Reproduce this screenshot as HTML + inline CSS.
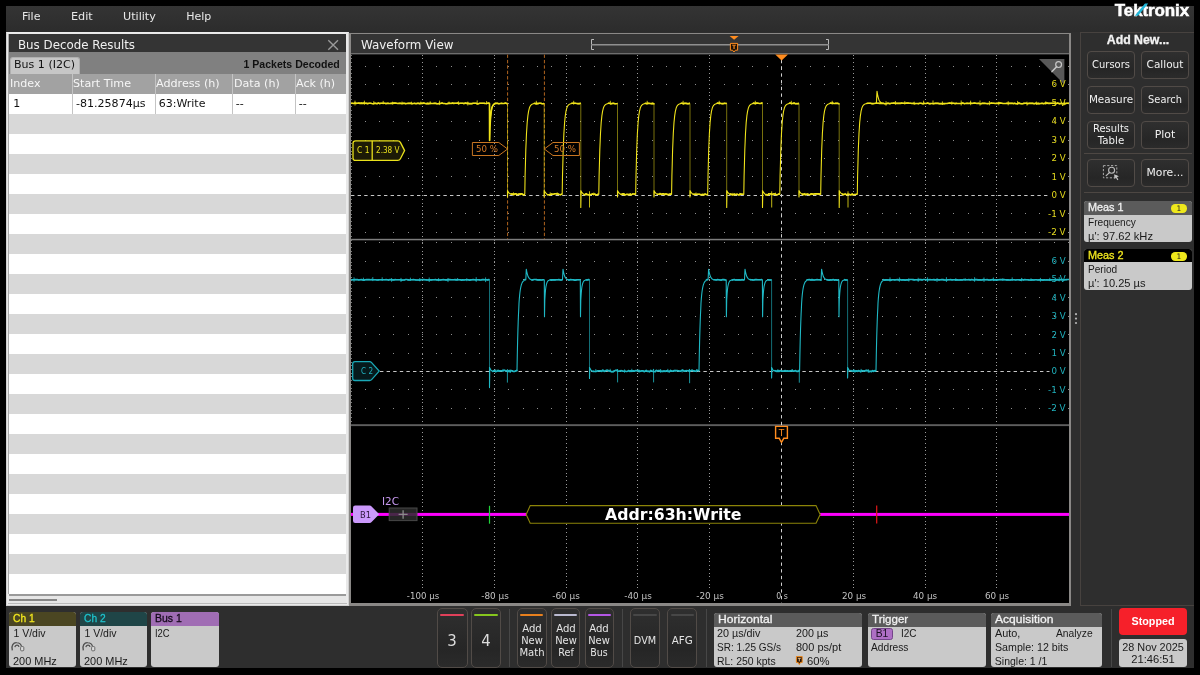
<!DOCTYPE html>
<html lang="en"><head><meta charset="utf-8"><title>Tektronix - Bus Decode Results / Waveform View</title>
<style>
html,body{margin:0;padding:0;background:#000;}
body{width:1200px;height:675px;overflow:hidden;position:relative;font-family:"DejaVu Sans","Liberation Sans",sans-serif;}
.a{position:absolute;box-sizing:border-box;}
.t{position:absolute;white-space:nowrap;height:16px;will-change:opacity;}
#frame{left:6px;top:6px;width:1188px;height:662px;background:#2e2e2e;}
#menubar{left:6px;top:6px;width:1188px;height:26px;background:linear-gradient(#343434,#2c2c2c);}
.btn{position:absolute;box-sizing:border-box;border:1px solid #514b47;border-radius:4px;background:linear-gradient(#2f2f2f,#262626 70%,#2b2b2b);}
.badge{position:absolute;box-sizing:border-box;border-radius:3px;background:#c9c9c9;overflow:hidden;}
.badge .hd{position:absolute;left:0;top:0;right:0;}
svg{position:absolute;left:0;top:0;}
</style></head><body>
<div id="frame" class="a"></div>
<div id="menubar" class="a"></div>
<div id="t0" class="t" style="left:21.50px;top:9.12px;font:400 11px/16px 'DejaVu Sans','Liberation Sans',sans-serif;color:#e8e8e8;transform:scaleX(1.0042);transform-origin:left center;">File</div>
<div id="t1" class="t" style="left:70.60px;top:9.12px;font:400 11px/16px 'DejaVu Sans','Liberation Sans',sans-serif;color:#e8e8e8;transform:scaleX(1.0182);transform-origin:left center;">Edit</div>
<div id="t2" class="t" style="left:122.50px;top:9.12px;font:400 11px/16px 'DejaVu Sans','Liberation Sans',sans-serif;color:#e8e8e8;transform:scaleX(1.0136);transform-origin:left center;">Utility</div>
<div id="t3" class="t" style="left:186.20px;top:9.12px;font:400 11px/16px 'DejaVu Sans','Liberation Sans',sans-serif;color:#e8e8e8;">Help</div>
<div class="t" id="logo" style="left:1114.8px;top:0.8px;height:20px;font:700 17px/20px 'Liberation Sans','DejaVu Sans',sans-serif;color:#fff;letter-spacing:-0.12px;-webkit-text-stroke:0.5px #fff;">Tektronix</div>
<svg width="1200" height="675" viewBox="0 0 1200 675" style="pointer-events:none"><polygon points="1134.8,15.8 1138,15.8 1148.2,3.4 1145,3.4" fill="#1fb6d9"/></svg>
<div class="a" style="left:6px;top:32px;width:343px;height:574px;background:#e9e9e9;border:1px solid #d0d0d0;border-top-color:#ececec;"></div>
<div class="a" style="left:8px;top:34px;width:338px;height:18px;background:#343434;"></div>
<div class="a" style="left:8px;top:52px;width:338px;height:22px;background:#808080;"></div>
<div class="a" style="left:9.5px;top:56.5px;width:70.5px;height:17.5px;background:#c6c6c6;border-radius:3px 3px 0 0;border:1px solid #b0b0b0;border-bottom:none"></div>
<div class="a" style="left:9px;top:74px;width:337px;height:20px;background:#a2a2a2;"></div>
<div class="a" style="left:9px;top:94px;width:337px;height:500px;background:repeating-linear-gradient(#ffffff 0,#ffffff 20px,#d8d8d8 20px,#d8d8d8 40px);"></div>
<div class="a" style="left:71.5px;top:74px;width:1px;height:40px;background:#c4c4c4;"></div>
<div class="a" style="left:154.5px;top:74px;width:1px;height:40px;background:#c4c4c4;"></div>
<div class="a" style="left:232.0px;top:74px;width:1px;height:40px;background:#c4c4c4;"></div>
<div class="a" style="left:294.5px;top:74px;width:1px;height:40px;background:#c4c4c4;"></div>
<div class="a" style="left:8px;top:34px;width:1px;height:560px;background:#aaa;"></div>
<div class="a" style="left:9px;top:594px;width:337px;height:1.5px;background:#9a9a9a;"></div>
<div class="a" style="left:9px;top:595.5px;width:337px;height:7px;background:#e6e6e6;"></div>
<div class="a" style="left:9px;top:599px;width:48px;height:2px;background:#858585;"></div>
<div class="a" style="left:8px;top:602.5px;width:339px;height:1px;background:#bbb;"></div>
<div id="t4" class="t" style="left:18.30px;top:36.64px;font:400 12px/16px 'DejaVu Sans','Liberation Sans',sans-serif;color:#f0f0f0;transform:scaleX(0.9863);transform-origin:left center;">Bus Decode Results</div>
<div id="t5" class="t" style="left:14.30px;top:56.72px;font:400 11px/16px 'DejaVu Sans','Liberation Sans',sans-serif;color:#111;transform:scaleX(1.0041);transform-origin:left center;">Bus 1 (I2C)</div>
<div id="t6" class="t" style="right:860.40px;top:55.71px;font:700 10.5px/16px 'Liberation Sans','DejaVu Sans',sans-serif;color:#111;transform:scaleX(1.0050);transform-origin:right center;">1 Packets Decoded</div>
<div id="t7" class="t" style="left:10.30px;top:76.02px;font:400 11px/16px 'DejaVu Sans','Liberation Sans',sans-serif;color:#f6f6f6;transform:scaleX(1.0067);transform-origin:left center;">Index</div>
<div id="t8" class="t" style="left:73.30px;top:76.02px;font:400 11px/16px 'DejaVu Sans','Liberation Sans',sans-serif;color:#f6f6f6;transform:scaleX(1.0123);transform-origin:left center;">Start Time</div>
<div id="t9" class="t" style="left:156.30px;top:76.02px;font:400 11px/16px 'DejaVu Sans','Liberation Sans',sans-serif;color:#f6f6f6;transform:scaleX(1.0134);transform-origin:left center;">Address (h)</div>
<div id="t10" class="t" style="left:233.70px;top:76.02px;font:400 11px/16px 'DejaVu Sans','Liberation Sans',sans-serif;color:#f6f6f6;transform:scaleX(1.0104);transform-origin:left center;">Data (h)</div>
<div id="t11" class="t" style="left:296.20px;top:76.02px;font:400 11px/16px 'DejaVu Sans','Liberation Sans',sans-serif;color:#f6f6f6;transform:scaleX(1.0074);transform-origin:left center;">Ack (h)</div>
<div id="t12" class="t" style="left:13.30px;top:95.62px;font:400 11px/16px 'DejaVu Sans','Liberation Sans',sans-serif;color:#111;">1</div>
<div id="t13" class="t" style="left:75.50px;top:95.62px;font:400 11px/16px 'DejaVu Sans','Liberation Sans',sans-serif;color:#111;transform:scaleX(1.0045);transform-origin:left center;">-81.25874µs</div>
<div id="t14" class="t" style="left:158.70px;top:95.62px;font:400 11px/16px 'DejaVu Sans','Liberation Sans',sans-serif;color:#111;">63:Write</div>
<div id="t15" class="t" style="left:235.80px;top:95.62px;font:400 11px/16px 'DejaVu Sans','Liberation Sans',sans-serif;color:#111;">--</div>
<div id="t16" class="t" style="left:298.70px;top:95.62px;font:400 11px/16px 'DejaVu Sans','Liberation Sans',sans-serif;color:#111;">--</div>
<svg width="1200" height="675" viewBox="0 0 1200 675" style="pointer-events:none"><path d="M328.3,40.3 L338,49.7 M338,40.3 L328.3,49.7" stroke="#9a9a9a" stroke-width="1.4" fill="none"/></svg>
<div class="a" style="left:349px;top:33px;width:722px;height:573px;background:#8a8886;"></div>
<div class="a" style="left:351px;top:34px;width:718px;height:19px;background:#343434;"></div>
<div class="a" style="left:351px;top:53px;width:718px;height:1px;background:#6e6e6e;"></div>
<div class="a" style="left:351px;top:54px;width:718px;height:549px;background:#000;border-top:1px solid #2a2a2a;"></div>
<div id="t17" class="t" style="left:360.80px;top:36.64px;font:400 12px/16px 'DejaVu Sans','Liberation Sans',sans-serif;color:#f0f0f0;transform:scaleX(0.9923);transform-origin:left center;">Waveform View</div>
<svg width="1200" height="675" viewBox="0 0 1200 675" style="pointer-events:none">
<defs><clipPath id="cp"><rect x="351" y="54.3" width="718" height="548.6"/></clipPath></defs>
<g clip-path="url(#cp)">
<path d="M422.5,54.5V603M494.3,54.5V603M566.1,54.5V603M637.9,54.5V603M709.7,54.5V603M853.3,54.5V603M925.1,54.5V603M996.9,54.5V603" stroke="#9a9a9a" stroke-width="1" stroke-dasharray="1 2.7" fill="none" shape-rendering="crispEdges"/>
<path d="M351.5,54.5V425" stroke="#7a7a7a" stroke-width="1" stroke-dasharray="1 2.7" fill="none" shape-rendering="crispEdges"/>
<path d="M364.56,66.2H1069M364.56,84.6H1069M364.56,103.1H1069M364.56,121.5H1069M364.56,140.0H1069M364.56,158.4H1069M364.56,176.9H1069M364.56,213.8H1069M364.56,232.2H1069M364.56,242.7H1069M364.56,261.1H1069M364.56,279.5H1069M364.56,297.9H1069M364.56,316.3H1069M364.56,334.7H1069M364.56,353.1H1069M364.56,389.9H1069M364.56,408.3H1069" stroke="#8e8e8e" stroke-width="1" stroke-dasharray="1 13.36" fill="none" shape-rendering="crispEdges"/>
<rect x="351" y="238.8" width="718" height="1.5" fill="#7d7d7d"/>
<rect x="351" y="424.2" width="718" height="1.9" fill="#5e5e5e"/>
<path d="M351,195.5H1049.5M380,371.5H1049.5" stroke="#c6c6c6" stroke-width="1" stroke-dasharray="3.4 3.2" fill="none"/>
<path d="M781.5,60V603" stroke="#d0d0d0" stroke-width="1" stroke-dasharray="3.3 3.4" fill="none"/>
<path d="M507.6,54.5V238.8M544.4,54.5V238.8" stroke="#b0641e" stroke-width="1" stroke-dasharray="3.4 2" fill="none"/>
<path d="M351.0,103.3L352.3,103.2L353.6,103.5L354.9,103.1L356.2,103.4L357.5,103.3L358.8,103.1L360.1,103.4L361.4,103.1L362.7,103.4L364.0,103.1L365.3,103.2L366.6,103.4L367.9,103.6L369.2,103.2L370.5,103.2L371.8,103.5L373.1,103.7L374.4,103.4L375.7,103.3L377.0,103.7L378.3,103.1L379.6,103.6L380.9,103.3L382.2,103.2L383.5,103.2L384.8,103.3L386.1,103.6L387.4,103.2L388.7,103.4L390.0,103.5L391.3,103.3L392.6,103.4L393.9,103.1L395.2,103.1L396.5,103.2L397.8,103.5L399.1,103.4L400.4,103.3L401.7,103.5L403.0,103.4L404.3,103.3L405.6,103.6L406.9,103.5L408.2,103.2L409.5,103.4L410.8,103.4L412.1,103.6L413.4,103.5L414.7,103.3L416.0,103.7L417.3,103.2L418.6,103.4L419.9,103.6L421.2,103.2L422.5,103.4L423.8,103.1L425.1,103.5L426.4,103.6L427.7,103.4L429.0,103.6L430.3,103.3L431.6,103.5L432.9,103.5L434.2,103.4L435.5,103.4L436.8,103.6L438.1,103.7L439.4,103.4L440.7,103.5L442.0,103.1L443.3,103.5L444.6,103.5L445.9,103.7L447.2,103.6L448.5,103.3L449.8,103.3L451.1,103.5L452.4,103.1L453.7,103.4L455.0,103.2L456.3,103.2L457.6,103.1L458.9,103.6L460.2,103.2L461.5,103.2L462.8,103.3L464.1,103.6L465.4,103.1L466.7,103.4L468.0,103.4L469.3,103.6L470.6,103.6L471.9,103.6L473.2,103.3L474.5,103.3L475.8,103.3L477.1,103.6L478.4,103.7L479.7,103.2L481.0,103.2L482.3,103.2L483.6,103.2L484.9,103.4L486.2,103.5L487.5,103.3L488.8,103.1L489.5,103.4L489.5,103.4L489.6,140.5L489.9,128.0L489.9,128.0L490.3,121.7L490.6,117.0L491.0,113.5L491.3,110.9L491.7,109.0L492.0,107.5L492.4,106.5L492.8,105.7L493.1,105.1L493.5,104.7L493.8,104.3L494.2,104.1L494.5,103.9L494.9,103.8L495.0,103.4L496.3,103.3L497.6,103.4L498.9,103.7L500.2,103.5L501.5,103.4L502.8,103.5L504.1,103.5L505.4,103.1L506.7,103.6L507.5,103.4L507.5,103.4M507.5,190.3L507.5,197.0L507.8,191.1L508.7,192.7L510.0,193.9L510.5,193.8L511.6,194.1L512.7,194.0L513.8,194.7L514.9,193.9L516.0,193.7L517.1,194.8L518.2,194.3L519.3,193.9L520.4,194.4L521.5,193.7L522.6,194.3L523.7,194.9L524.8,194.3L524.8,194.3L525.1,176.1L525.5,161.6L525.8,149.9L526.2,140.6L526.5,133.2L526.9,127.2L527.2,122.4L527.6,118.6L527.9,115.6L528.3,113.1L528.6,111.2L529.0,109.6L529.3,108.4L529.6,107.4L530.0,106.6L530.3,106.0L530.7,105.4L531.0,105.0L531.4,104.7L531.7,104.4L532.1,104.2L532.4,104.1L532.8,103.9L533.1,103.8L533.5,103.7L533.8,103.7L534.0,103.2L535.3,103.6L536.6,103.4L537.9,103.6L539.2,103.3L540.5,103.2L541.8,103.6L543.1,103.7L544.2,103.4L544.2,103.4M544.2,190.3L544.2,197.0L544.5,191.1L545.4,192.7L546.7,193.9L547.2,194.7L548.3,194.7L549.4,194.7L550.5,194.6L551.6,194.0L552.7,194.3L553.8,194.1L554.9,193.7L556.0,193.7L557.1,194.0L558.2,194.0L559.3,194.5L560.4,194.8L561.5,194.2L562.2,194.3L562.2,194.3L562.5,176.1L562.9,161.6L563.2,149.9L563.6,140.6L563.9,133.2L564.3,127.2L564.6,122.4L565.0,118.6L565.3,115.6L565.7,113.1L566.0,111.2L566.4,109.6L566.7,108.4L567.0,107.4L567.4,106.6L567.7,106.0L568.1,105.4L568.4,105.0L568.8,104.7L569.1,104.4L569.5,104.2L569.8,104.1L570.2,103.9L570.5,103.8L570.9,103.7L571.2,103.7L571.4,103.2L572.7,103.2L574.0,103.2L575.3,103.2L576.6,103.5L577.9,103.6L579.2,103.6L580.5,103.4L580.8,103.4L580.8,103.4M580.8,190.3L580.8,207.5L581.1,191.1L582.0,192.7L583.3,193.9L583.8,194.5L584.9,194.7L586.0,193.8L587.1,194.5L588.2,194.8L589.3,194.6L590.4,194.6L591.5,194.3L592.6,193.9L593.7,194.6L594.8,194.1L595.9,194.7L597.0,194.9L598.1,194.2L598.8,194.3L598.8,194.3L599.1,176.1L599.5,161.6L599.8,149.9L600.2,140.6L600.5,133.2L600.9,127.2L601.2,122.4L601.6,118.6L601.9,115.6L602.3,113.1L602.6,111.2L603.0,109.6L603.3,108.4L603.6,107.4L604.0,106.6L604.3,106.0L604.7,105.4L605.0,105.0L605.4,104.7L605.7,104.4L606.1,104.2L606.4,104.1L606.8,103.9L607.1,103.8L607.5,103.7L607.8,103.7L608.0,103.2L609.3,103.2L610.6,103.6L611.9,103.6L613.2,103.2L614.5,103.6L615.8,103.7L617.1,103.5L617.5,103.4L617.5,103.4M617.5,190.3L617.5,197.0L617.8,191.1L618.7,192.7L620.0,193.9L620.5,194.1L621.6,194.4L622.7,193.9L623.8,193.7L624.9,194.9L626.0,194.5L627.1,194.3L628.2,194.8L629.3,194.2L630.4,194.7L631.5,194.7L632.6,194.0L633.7,194.0L634.8,194.1L635.7,194.3L635.7,194.3L636.0,176.1L636.4,161.6L636.7,149.9L637.1,140.6L637.4,133.2L637.8,127.2L638.1,122.4L638.5,118.6L638.8,115.6L639.2,113.1L639.5,111.2L639.9,109.6L640.2,108.4L640.5,107.4L640.9,106.6L641.2,106.0L641.6,105.4L641.9,105.0L642.3,104.7L642.6,104.4L643.0,104.2L643.3,104.1L643.7,103.9L644.0,103.8L644.4,103.7L644.7,103.7L644.9,103.2L646.2,103.6L647.5,103.3L648.8,103.4L650.1,103.5L651.4,103.6L652.7,103.4L654.0,103.7L654.0,103.4L654.0,103.4M654.0,190.3L654.0,197.0L654.3,191.1L655.2,192.7L656.5,193.9L657.0,194.3L658.1,194.3L659.2,194.3L660.3,193.7L661.4,194.2L662.5,193.9L663.6,193.7L664.7,194.7L665.8,193.9L666.9,194.3L668.0,194.6L669.1,194.4L670.2,194.1L671.3,194.3L671.6,194.3L671.6,194.3L671.9,176.1L672.3,161.6L672.6,149.9L673.0,140.6L673.3,133.2L673.7,127.2L674.0,122.4L674.4,118.6L674.7,115.6L675.1,113.1L675.4,111.2L675.8,109.6L676.1,108.4L676.4,107.4L676.8,106.6L677.1,106.0L677.5,105.4L677.8,105.0L678.2,104.7L678.5,104.4L678.9,104.2L679.2,104.1L679.6,103.9L679.9,103.8L680.3,103.7L680.6,103.7L680.8,103.2L682.1,103.3L683.4,103.6L684.7,103.4L686.0,103.4L687.3,103.6L688.6,103.6L689.9,103.4L690.0,103.4L690.0,103.4M690.0,190.3L690.0,197.0L690.3,191.1L691.2,192.7L692.5,193.9L693.0,194.4L694.1,194.3L695.2,194.3L696.3,194.5L697.4,194.2L698.5,194.3L699.6,194.3L700.7,194.8L701.8,194.5L702.9,194.8L704.0,194.8L705.1,194.0L706.2,194.4L707.3,194.8L707.7,194.3L707.7,194.3L708.0,176.1L708.4,161.6L708.7,149.9L709.1,140.6L709.4,133.2L709.8,127.2L710.1,122.4L710.5,118.6L710.8,115.6L711.2,113.1L711.5,111.2L711.9,109.6L712.2,108.4L712.5,107.4L712.9,106.6L713.2,106.0L713.6,105.4L713.9,105.0L714.3,104.7L714.6,104.4L715.0,104.2L715.3,104.1L715.7,103.9L716.0,103.8L716.4,103.7L716.7,103.7L716.9,103.1L718.2,103.2L719.5,103.1L720.8,103.5L722.1,103.6L723.4,103.6L724.7,103.2L726.0,103.5L726.7,103.4L726.7,103.4M726.7,190.3L726.7,207.5L727.0,191.1L727.9,192.7L729.2,193.9L729.7,194.5L730.8,193.9L731.9,194.8L733.0,194.9L734.1,194.0L735.2,194.8L736.3,194.2L737.4,194.3L738.5,194.9L739.6,194.7L740.7,193.9L741.8,194.2L742.9,194.3L743.8,194.3L743.8,194.3L744.1,176.1L744.5,161.6L744.8,149.9L745.2,140.6L745.5,133.2L745.9,127.2L746.2,122.4L746.6,118.6L746.9,115.6L747.3,113.1L747.6,111.2L748.0,109.6L748.3,108.4L748.6,107.4L749.0,106.6L749.3,106.0L749.7,105.4L750.0,105.0L750.4,104.7L750.7,104.4L751.1,104.2L751.4,104.1L751.8,103.9L752.1,103.8L752.5,103.7L752.8,103.7L753.0,103.1L754.3,103.4L755.6,103.4L756.9,103.1L758.2,103.3L759.5,103.5L760.8,103.4L762.1,103.1L762.5,103.4L762.5,103.4M762.5,190.3L762.5,207.5L762.8,191.1L763.7,192.7L765.0,193.9L765.5,194.9L766.6,194.6L767.7,194.9L768.8,193.8L769.9,194.0L771.0,193.7L772.1,194.6L773.2,194.0L774.3,193.9L775.4,194.2L776.5,194.8L777.6,194.7L778.7,194.0L779.8,194.3L779.8,194.3L780.1,176.1L780.5,161.6L780.8,149.9L781.2,140.6L781.5,133.2L781.9,127.2L782.2,122.4L782.6,118.6L782.9,115.6L783.3,113.1L783.6,111.2L784.0,109.6L784.3,108.4L784.6,107.4L785.0,106.6L785.3,106.0L785.7,105.4L786.0,105.0L786.4,104.7L786.7,104.4L787.1,104.2L787.4,104.1L787.8,103.9L788.1,103.8L788.5,103.7L788.8,103.7L789.0,103.2L790.3,103.1L791.6,103.5L792.9,103.4L794.2,103.1L795.5,103.7L796.8,103.5L798.1,103.6L799.0,103.4L799.0,103.4M799.0,190.3L799.0,197.0L799.3,191.1L800.2,192.7L801.5,193.9L802.0,193.8L803.1,194.7L804.2,193.8L805.3,194.7L806.4,194.2L807.5,194.1L808.6,194.4L809.7,194.8L810.8,194.0L811.9,193.9L813.0,194.3L814.1,194.0L815.2,193.8L816.3,193.9L817.4,193.8L818.5,193.9L819.6,194.1L820.7,194.3L820.7,194.3L821.0,176.1L821.4,161.6L821.7,149.9L822.1,140.6L822.4,133.2L822.8,127.2L823.1,122.4L823.5,118.6L823.8,115.6L824.2,113.1L824.5,111.2L824.9,109.6L825.2,108.4L825.5,107.4L825.9,106.6L826.2,106.0L826.6,105.4L826.9,105.0L827.3,104.7L827.6,104.4L828.0,104.2L828.3,104.1L828.7,103.9L829.0,103.8L829.4,103.7L829.7,103.7L829.9,103.1L831.2,103.3L832.5,103.1L833.8,103.5L835.1,103.4L836.4,103.2L837.7,103.4L839.0,103.7L839.2,103.4L839.2,103.4M839.2,190.3L839.2,207.5L839.5,191.1L840.4,192.7L841.7,193.9L842.2,193.8L843.3,194.7L844.4,194.2L845.5,194.3L846.6,194.7L847.7,194.2L848.8,194.3L849.9,194.5L851.0,194.9L852.1,194.1L853.2,194.7L854.3,194.5L855.4,194.5L856.5,194.2L857.3,194.3L857.3,194.3L857.6,176.1L858.0,161.6L858.3,149.9L858.7,140.6L859.0,133.2L859.4,127.2L859.7,122.4L860.1,118.6L860.4,115.6L860.8,113.1L861.1,111.2L861.5,109.6L861.8,108.4L862.1,107.4L862.5,106.6L862.8,106.0L863.2,105.4L863.5,105.0L863.9,104.7L864.2,104.4L864.6,104.2L864.9,104.1L865.3,103.9L865.6,103.8L866.0,103.7L866.3,103.7L866.5,103.5L867.8,103.3L869.1,103.2L870.4,103.2L871.7,103.6L873.0,103.6L874.3,103.5L875.6,103.3L876.9,103.2L878.2,103.3L879.5,103.4L880.8,103.2L882.1,103.4L883.4,103.3L884.7,103.7L886.0,103.7L887.3,103.4L888.6,103.2L889.9,103.7L891.2,103.3L892.5,103.3L893.8,103.1L895.1,103.3L896.4,103.4L897.7,103.4L899.0,103.2L900.3,103.4L901.6,103.1L902.9,103.3L904.2,103.2L905.5,103.3L906.8,103.1L908.1,103.1L909.4,103.3L910.7,103.2L912.0,103.5L913.3,103.4L914.6,103.6L915.9,103.5L917.2,103.5L918.5,103.6L919.8,103.3L921.1,103.3L922.4,103.7L923.7,103.2L925.0,103.5L926.3,103.5L927.6,103.1L928.9,103.6L930.2,103.6L931.5,103.5L932.8,103.5L934.1,103.6L935.4,103.2L936.7,103.4L938.0,103.4L939.3,103.6L940.6,103.6L941.9,103.6L943.2,103.5L944.5,103.6L945.8,103.5L947.1,103.5L948.4,103.2L949.7,103.1L951.0,103.2L952.3,103.3L953.6,103.2L954.9,103.6L956.2,103.4L957.5,103.5L958.8,103.5L960.1,103.5L961.4,103.4L962.7,103.1L964.0,103.6L965.3,103.5L966.6,103.4L967.9,103.4L969.2,103.5L970.5,103.1L971.8,103.5L973.1,103.3L974.4,103.1L975.7,103.3L977.0,103.5L978.3,103.2L979.6,103.5L980.9,103.7L982.2,103.4L983.5,103.3L984.8,103.4L986.1,103.5L987.4,103.6L988.7,103.5L990.0,103.5L991.3,103.1L992.6,103.2L993.9,103.3L995.2,103.5L996.5,103.3L997.8,103.4L999.1,103.1L1000.4,103.1L1001.7,103.3L1003.0,103.5L1004.3,103.5L1005.6,103.5L1006.9,103.3L1008.2,103.4L1009.5,103.4L1010.8,103.4L1012.1,103.2L1013.4,103.6L1014.7,103.2L1016.0,103.7L1017.3,103.7L1018.6,103.1L1019.9,103.4L1021.2,103.6L1022.5,103.7L1023.8,103.4L1025.1,103.3L1026.4,103.2L1027.7,103.7L1029.0,103.2L1030.3,103.4L1031.6,103.2L1032.9,103.4L1034.2,103.7L1035.5,103.2L1036.8,103.6L1038.1,103.4L1039.4,103.6L1040.7,103.5L1042.0,103.2L1043.3,103.6L1044.6,103.4L1045.9,103.1L1047.2,103.1L1048.5,103.4L1049.8,103.4L1051.1,103.3L1052.4,103.2L1053.7,103.3L1055.0,103.3L1056.3,103.6L1057.6,103.1L1058.9,103.6L1060.2,103.6L1061.5,103.2L1062.8,103.7L1064.1,103.5L1065.4,103.6L1066.7,103.3L1068.0,103.3L1069.0,103.4" stroke="#efe21a" stroke-width="1.1" fill="none" stroke-linejoin="round"/>
<path d="M351.0,103.3L352.3,103.2L353.6,103.5L354.9,103.1L356.2,103.4L357.5,103.3L358.8,103.1L360.1,103.4L361.4,103.1L362.7,103.4L364.0,103.1L365.3,103.2L366.6,103.4L367.9,103.6L369.2,103.2L370.5,103.2L371.8,103.5L373.1,103.7L374.4,103.4L375.7,103.3L377.0,103.7L378.3,103.1L379.6,103.6L380.9,103.3L382.2,103.2L383.5,103.2L384.8,103.3L386.1,103.6L387.4,103.2L388.7,103.4L390.0,103.5L391.3,103.3L392.6,103.4L393.9,103.1L395.2,103.1L396.5,103.2L397.8,103.5L399.1,103.4L400.4,103.3L401.7,103.5L403.0,103.4L404.3,103.3L405.6,103.6L406.9,103.5L408.2,103.2L409.5,103.4L410.8,103.4L412.1,103.6L413.4,103.5L414.7,103.3L416.0,103.7L417.3,103.2L418.6,103.4L419.9,103.6L421.2,103.2L422.5,103.4L423.8,103.1L425.1,103.5L426.4,103.6L427.7,103.4L429.0,103.6L430.3,103.3L431.6,103.5L432.9,103.5L434.2,103.4L435.5,103.4L436.8,103.6L438.1,103.7L439.4,103.4L440.7,103.5L442.0,103.1L443.3,103.5L444.6,103.5L445.9,103.7L447.2,103.6L448.5,103.3L449.8,103.3L451.1,103.5L452.4,103.1L453.7,103.4L455.0,103.2L456.3,103.2L457.6,103.1L458.9,103.6L460.2,103.2L461.5,103.2L462.8,103.3L464.1,103.6L465.4,103.1L466.7,103.4L468.0,103.4L469.3,103.6L470.6,103.6L471.9,103.6L473.2,103.3L474.5,103.3L475.8,103.3L477.1,103.6L478.4,103.7L479.7,103.2L481.0,103.2L482.3,103.2L483.6,103.2L484.9,103.4L486.2,103.5L487.5,103.3L488.8,103.1L489.5,103.4L489.5,103.4L489.6,140.5L489.9,128.0L489.9,128.0L490.3,121.7L490.6,117.0L491.0,113.5L491.3,110.9L491.7,109.0L492.0,107.5L492.4,106.5L492.8,105.7L493.1,105.1L493.5,104.7L493.8,104.3L494.2,104.1L494.5,103.9L494.9,103.8L495.0,103.4L496.3,103.3L497.6,103.4L498.9,103.7L500.2,103.5L501.5,103.4L502.8,103.5L504.1,103.5L505.4,103.1L506.7,103.6L507.5,103.4L507.5,103.4M495.0,103.4L496.3,103.3L497.6,103.4L498.9,103.7L500.2,103.5L501.5,103.4L502.8,103.5L504.1,103.5L505.4,103.1L506.7,103.6L507.5,103.4M510.5,193.8L511.6,194.1L512.7,194.0L513.8,194.7L514.9,193.9L516.0,193.7L517.1,194.8L518.2,194.3L519.3,193.9L520.4,194.4L521.5,193.7L522.6,194.3L523.7,194.9L524.8,194.3M534.0,103.2L535.3,103.6L536.6,103.4L537.9,103.6L539.2,103.3L540.5,103.2L541.8,103.6L543.1,103.7L544.2,103.4M547.2,194.7L548.3,194.7L549.4,194.7L550.5,194.6L551.6,194.0L552.7,194.3L553.8,194.1L554.9,193.7L556.0,193.7L557.1,194.0L558.2,194.0L559.3,194.5L560.4,194.8L561.5,194.2L562.2,194.3M571.4,103.2L572.7,103.2L574.0,103.2L575.3,103.2L576.6,103.5L577.9,103.6L579.2,103.6L580.5,103.4L580.8,103.4M583.8,194.5L584.9,194.7L586.0,193.8L587.1,194.5L588.2,194.8L589.3,194.6L590.4,194.6L591.5,194.3L592.6,193.9L593.7,194.6L594.8,194.1L595.9,194.7L597.0,194.9L598.1,194.2L598.8,194.3M608.0,103.2L609.3,103.2L610.6,103.6L611.9,103.6L613.2,103.2L614.5,103.6L615.8,103.7L617.1,103.5L617.5,103.4M620.5,194.1L621.6,194.4L622.7,193.9L623.8,193.7L624.9,194.9L626.0,194.5L627.1,194.3L628.2,194.8L629.3,194.2L630.4,194.7L631.5,194.7L632.6,194.0L633.7,194.0L634.8,194.1L635.7,194.3M644.9,103.2L646.2,103.6L647.5,103.3L648.8,103.4L650.1,103.5L651.4,103.6L652.7,103.4L654.0,103.7L654.0,103.4M657.0,194.3L658.1,194.3L659.2,194.3L660.3,193.7L661.4,194.2L662.5,193.9L663.6,193.7L664.7,194.7L665.8,193.9L666.9,194.3L668.0,194.6L669.1,194.4L670.2,194.1L671.3,194.3L671.6,194.3M680.8,103.2L682.1,103.3L683.4,103.6L684.7,103.4L686.0,103.4L687.3,103.6L688.6,103.6L689.9,103.4L690.0,103.4M693.0,194.4L694.1,194.3L695.2,194.3L696.3,194.5L697.4,194.2L698.5,194.3L699.6,194.3L700.7,194.8L701.8,194.5L702.9,194.8L704.0,194.8L705.1,194.0L706.2,194.4L707.3,194.8L707.7,194.3M716.9,103.1L718.2,103.2L719.5,103.1L720.8,103.5L722.1,103.6L723.4,103.6L724.7,103.2L726.0,103.5L726.7,103.4M729.7,194.5L730.8,193.9L731.9,194.8L733.0,194.9L734.1,194.0L735.2,194.8L736.3,194.2L737.4,194.3L738.5,194.9L739.6,194.7L740.7,193.9L741.8,194.2L742.9,194.3L743.8,194.3M753.0,103.1L754.3,103.4L755.6,103.4L756.9,103.1L758.2,103.3L759.5,103.5L760.8,103.4L762.1,103.1L762.5,103.4M765.5,194.9L766.6,194.6L767.7,194.9L768.8,193.8L769.9,194.0L771.0,193.7L772.1,194.6L773.2,194.0L774.3,193.9L775.4,194.2L776.5,194.8L777.6,194.7L778.7,194.0L779.8,194.3M789.0,103.2L790.3,103.1L791.6,103.5L792.9,103.4L794.2,103.1L795.5,103.7L796.8,103.5L798.1,103.6L799.0,103.4M802.0,193.8L803.1,194.7L804.2,193.8L805.3,194.7L806.4,194.2L807.5,194.1L808.6,194.4L809.7,194.8L810.8,194.0L811.9,193.9L813.0,194.3L814.1,194.0L815.2,193.8L816.3,193.9L817.4,193.8L818.5,193.9L819.6,194.1L820.7,194.3M829.9,103.1L831.2,103.3L832.5,103.1L833.8,103.5L835.1,103.4L836.4,103.2L837.7,103.4L839.0,103.7L839.2,103.4M842.2,193.8L843.3,194.7L844.4,194.2L845.5,194.3L846.6,194.7L847.7,194.2L848.8,194.3L849.9,194.5L851.0,194.9L852.1,194.1L853.2,194.7L854.3,194.5L855.4,194.5L856.5,194.2L857.3,194.3M866.5,103.5L867.8,103.3L869.1,103.2L870.4,103.2L871.7,103.6L873.0,103.6L874.3,103.5L875.6,103.3L876.9,103.2L878.2,103.3L879.5,103.4L880.8,103.2L882.1,103.4L883.4,103.3L884.7,103.7L886.0,103.7L887.3,103.4L888.6,103.2L889.9,103.7L891.2,103.3L892.5,103.3L893.8,103.1L895.1,103.3L896.4,103.4L897.7,103.4L899.0,103.2L900.3,103.4L901.6,103.1L902.9,103.3L904.2,103.2L905.5,103.3L906.8,103.1L908.1,103.1L909.4,103.3L910.7,103.2L912.0,103.5L913.3,103.4L914.6,103.6L915.9,103.5L917.2,103.5L918.5,103.6L919.8,103.3L921.1,103.3L922.4,103.7L923.7,103.2L925.0,103.5L926.3,103.5L927.6,103.1L928.9,103.6L930.2,103.6L931.5,103.5L932.8,103.5L934.1,103.6L935.4,103.2L936.7,103.4L938.0,103.4L939.3,103.6L940.6,103.6L941.9,103.6L943.2,103.5L944.5,103.6L945.8,103.5L947.1,103.5L948.4,103.2L949.7,103.1L951.0,103.2L952.3,103.3L953.6,103.2L954.9,103.6L956.2,103.4L957.5,103.5L958.8,103.5L960.1,103.5L961.4,103.4L962.7,103.1L964.0,103.6L965.3,103.5L966.6,103.4L967.9,103.4L969.2,103.5L970.5,103.1L971.8,103.5L973.1,103.3L974.4,103.1L975.7,103.3L977.0,103.5L978.3,103.2L979.6,103.5L980.9,103.7L982.2,103.4L983.5,103.3L984.8,103.4L986.1,103.5L987.4,103.6L988.7,103.5L990.0,103.5L991.3,103.1L992.6,103.2L993.9,103.3L995.2,103.5L996.5,103.3L997.8,103.4L999.1,103.1L1000.4,103.1L1001.7,103.3L1003.0,103.5L1004.3,103.5L1005.6,103.5L1006.9,103.3L1008.2,103.4L1009.5,103.4L1010.8,103.4L1012.1,103.2L1013.4,103.6L1014.7,103.2L1016.0,103.7L1017.3,103.7L1018.6,103.1L1019.9,103.4L1021.2,103.6L1022.5,103.7L1023.8,103.4L1025.1,103.3L1026.4,103.2L1027.7,103.7L1029.0,103.2L1030.3,103.4L1031.6,103.2L1032.9,103.4L1034.2,103.7L1035.5,103.2L1036.8,103.6L1038.1,103.4L1039.4,103.6L1040.7,103.5L1042.0,103.2L1043.3,103.6L1044.6,103.4L1045.9,103.1L1047.2,103.1L1048.5,103.4L1049.8,103.4L1051.1,103.3L1052.4,103.2L1053.7,103.3L1055.0,103.3L1056.3,103.6L1057.6,103.1L1058.9,103.6L1060.2,103.6L1061.5,103.2L1062.8,103.7L1064.1,103.5L1065.4,103.6L1066.7,103.3L1068.0,103.3L1069.0,103.4" stroke="#efe21a" stroke-width="1.6" fill="none" stroke-linejoin="round"/>
<path d="M507.5,103.4L507.5,195.3M544.2,103.4L544.2,195.3M580.8,103.4L580.8,195.3M617.5,103.4L617.5,195.3M654.0,103.4L654.0,195.3M690.0,103.4L690.0,195.3M726.7,103.4L726.7,195.3M762.5,103.4L762.5,195.3M799.0,103.4L799.0,195.3M839.2,103.4L839.2,195.3" stroke="#efe21a" stroke-width="1" fill="none" opacity="0.5"/>
<path d="M876.4,103.4L877,91.2 L877.8,96 L879,100.2 L880.6,102.4 L882.5,103.4" stroke="#efe21a" stroke-width="1.1" fill="none" stroke-linejoin="round"/>
<path d="M355.0,100.7V105.5M364.4,100.7V104.8M373.8,101.2V104.4M383.2,100.9V104.3M392.6,101.7V104.5M402.0,101.6V104.7M411.4,101.7V104.2M420.8,101.6V104.4M430.2,101.3V104.3M439.6,100.6V105.1M449.0,101.6V104.6M458.4,101.3V104.8M467.8,101.6V105.5M477.2,100.4V104.9M486.6,101.1V104.4M513.5,192.4V195.4M520.5,193.0V195.1M536.3,100.8V104.7M550.2,192.4V195.6M557.2,192.4V195.1M573.7,100.8V104.7M586.8,192.9V195.6M593.8,192.6V194.9M610.3,100.8V104.7M623.5,193.0V195.3M630.5,193.0V195.1M647.2,100.8V104.7M660.0,192.7V195.4M667.0,193.1V195.3M683.1,100.8V104.7M696.0,192.5V194.9M703.0,193.1V195.2M719.2,100.8V104.7M732.7,192.9V194.9M739.7,192.9V195.4M755.3,100.8V104.7M768.5,193.1V195.6M775.5,192.7V195.4M791.3,100.8V104.7M805.0,192.9V195.4M812.0,193.0V195.2M819.0,193.1V195.1M832.2,100.8V104.7M845.2,192.9V194.8M852.2,193.1V194.8M886.0,101.2V105.7M895.4,101.0V104.8M904.8,101.2V104.6M914.2,101.7V104.4M923.6,100.7V104.7M933.0,100.5V104.6M942.4,101.4V105.0M951.8,101.5V104.8M961.2,100.5V105.5M970.6,100.7V105.2M980.0,100.5V105.6M989.4,101.0V105.3M998.8,101.7V105.3M1008.2,101.2V105.3M1017.6,100.9V104.7M1027.0,101.7V105.6M1036.4,101.6V104.9M1045.8,101.3V104.7M1055.2,100.8V105.7M1064.6,101.4V105.2M589.5,191.3V207.5M771.7,191.3V207.5M848.0,191.3V207.5" stroke="#efe21a" stroke-width="0.9" fill="none" opacity="0.9"/>
<path d="M351.0,279.7L352.3,279.8L353.6,279.7L354.9,279.6L356.2,279.6L357.5,279.6L358.8,280.0L360.1,279.8L361.4,279.6L362.7,280.0L364.0,280.1L365.3,279.8L366.6,279.6L367.9,279.6L369.2,279.6L370.5,279.7L371.8,279.6L373.1,279.7L374.4,279.7L375.7,279.8L377.0,280.0L378.3,279.9L379.6,279.8L380.9,279.8L382.2,279.8L383.5,279.7L384.8,279.7L386.1,279.6L387.4,279.7L388.7,280.1L390.0,279.6L391.3,279.8L392.6,279.9L393.9,280.0L395.2,279.6L396.5,279.7L397.8,279.7L399.1,279.7L400.4,279.8L401.7,280.1L403.0,280.0L404.3,280.0L405.6,279.5L406.9,279.5L408.2,279.9L409.5,280.0L410.8,279.8L412.1,279.8L413.4,279.5L414.7,279.7L416.0,280.0L417.3,280.0L418.6,280.0L419.9,280.1L421.2,279.7L422.5,279.6L423.8,279.6L425.1,279.8L426.4,279.9L427.7,280.0L429.0,279.9L430.3,279.9L431.6,279.9L432.9,279.8L434.2,279.8L435.5,279.5L436.8,280.0L438.1,279.7L439.4,280.0L440.7,279.9L442.0,279.7L443.3,279.6L444.6,279.7L445.9,279.9L447.2,279.9L448.5,279.6L449.8,279.6L451.1,279.8L452.4,279.8L453.7,279.7L455.0,279.6L456.3,279.9L457.6,279.5L458.9,279.7L460.2,279.8L461.5,280.1L462.8,279.9L464.1,280.0L465.4,279.8L466.7,279.7L468.0,279.7L469.3,280.1L470.6,279.9L471.9,279.7L473.2,279.5L474.5,279.8L475.8,279.9L477.1,279.8L478.4,279.7L479.7,279.9L481.0,280.0L482.3,279.6L483.6,279.5L484.9,279.7L486.2,279.8L487.5,279.9L488.8,279.6L489.5,279.8L489.5,279.8M489.5,367.0L489.5,387.6L489.8,368.0L490.8,369.8L492.0,371.0L492.5,371.6L493.6,370.8L494.7,370.6L495.8,371.6L496.9,371.3L498.0,370.3L499.1,371.2L500.2,370.8L501.3,370.8L502.4,370.8L503.5,370.5L504.6,370.3L505.7,370.7L506.8,370.8L507.9,371.6L509.0,370.5L510.1,371.6L511.2,370.6L512.3,370.8L513.4,371.5L514.5,371.5L515.6,370.9L516.7,370.4L517.0,371.0L517.0,371.0L517.3,354.9L517.6,341.6L517.9,330.7L518.2,321.7L518.5,314.3L518.8,308.2L519.0,303.2L519.3,299.0L519.6,295.6L519.9,292.8L520.2,290.5L520.5,288.6L520.8,287.1L521.1,285.8L521.4,284.7L521.7,283.9L522.0,283.1L522.2,282.6L522.5,282.1L522.8,281.7L523.1,281.3L523.4,281.1L523.7,280.8L524.0,280.7L524.1,279.5L525.4,279.8L525.7,279.8L525.8,279.8L526.3,269.2L527.0,273.0L528.1,276.6L529.5,278.8L531.3,279.8L531.3,280.0L532.6,279.9L533.9,279.5L535.2,279.5L536.5,279.6L537.8,280.0L539.1,279.7L540.4,279.9L541.7,280.0L543.0,279.7L543.9,279.8L544.3,279.8L544.5,316.7L544.8,300.0L544.8,300.0L545.2,293.6L545.6,289.3L546.0,286.3L546.5,284.2L546.9,282.8L547.3,281.9L547.7,281.2L548.1,280.8L548.5,280.5L549.0,280.3L549.4,280.1L549.8,280.0L549.8,279.7L551.1,280.1L552.4,279.9L553.7,279.7L555.0,279.9L556.3,279.7L557.6,279.7L558.9,279.5L560.2,279.9L561.5,280.0L562.4,279.8L562.5,279.8L563.0,269.2L563.7,273.0L564.8,276.6L566.2,278.8L568.0,279.8L568.0,279.9L569.3,280.0L570.6,279.5L571.9,279.7L573.2,279.8L574.5,280.1L575.8,280.1L577.1,279.7L578.4,279.7L579.7,279.8L579.9,279.8L580.3,279.8L580.5,316.7L580.8,300.0L580.8,300.0L581.2,293.6L581.6,289.3L582.0,286.3L582.5,284.2L582.9,282.8L583.3,281.9L583.7,281.2L584.1,280.8L584.5,280.5L585.0,280.3L585.4,280.1L585.8,280.0L585.8,279.8L587.1,280.0L588.4,279.6L589.5,279.8L589.5,279.8M589.5,367.0L589.5,378.5L589.8,368.0L590.8,369.8L592.0,371.0L592.5,371.4L593.6,371.3L594.7,371.5L595.8,371.4L596.9,371.2L598.0,370.8L599.1,370.7L600.2,370.8L601.3,371.4L602.4,370.4L603.5,370.6L604.6,371.4L605.7,370.6L606.8,370.4L607.9,370.3L609.0,371.1L610.1,370.8L611.2,371.7L612.3,371.5L613.4,371.7L614.5,370.7L615.6,370.4L616.7,370.4L617.8,371.0L618.9,371.3L620.0,370.9L621.1,370.6L622.2,370.9L623.3,371.2L624.4,371.2L625.5,371.3L626.6,371.5L627.7,371.2L628.8,370.5L629.9,371.5L631.0,370.7L632.1,371.1L633.2,370.8L634.3,371.3L635.4,370.6L636.5,370.6L637.6,370.6L638.7,370.5L639.8,371.5L640.9,371.1L642.0,370.8L643.1,370.9L644.2,371.7L645.3,371.0L646.4,370.6L647.5,371.4L648.6,371.2L649.7,371.7L650.8,370.4L651.9,371.0L653.0,371.4L654.1,371.5L655.2,371.6L656.3,370.4L657.4,370.7L658.5,370.5L659.6,370.6L660.7,371.7L661.8,371.1L662.9,371.6L664.0,370.8L665.1,371.5L666.2,370.9L667.3,370.7L668.4,371.4L669.5,371.6L670.6,370.4L671.7,371.1L672.8,371.2L673.9,370.6L675.0,370.8L676.1,370.5L677.2,370.6L678.3,370.7L679.4,371.1L680.5,371.2L681.6,370.6L682.7,370.3L683.8,370.8L684.9,371.2L686.0,370.6L687.1,370.7L688.2,370.6L689.3,371.4L690.4,371.1L691.5,370.4L692.6,370.4L693.7,370.9L694.8,371.1L695.9,371.2L697.0,370.4L698.1,370.5L699.0,371.0L699.0,371.0L699.3,354.9L699.6,341.6L699.9,330.7L700.2,321.7L700.5,314.3L700.8,308.2L701.0,303.2L701.3,299.0L701.6,295.6L701.9,292.8L702.2,290.5L702.5,288.6L702.8,287.1L703.1,285.8L703.4,284.7L703.7,283.9L704.0,283.1L704.2,282.6L704.5,282.1L704.8,281.7L705.1,281.3L705.4,281.1L705.7,280.8L706.0,280.7L706.1,279.8L707.4,279.6L708.0,279.8L708.1,279.8L708.6,269.2L709.3,273.0L710.4,276.6L711.8,278.8L713.6,279.8L713.6,279.7L714.9,279.8L716.2,280.0L717.5,279.6L718.8,279.8L720.1,280.0L721.4,280.1L722.7,279.6L724.0,279.6L725.3,280.0L725.8,279.8L726.2,279.8L726.4,316.7L726.7,300.0L726.7,300.0L727.1,293.6L727.5,289.3L727.9,286.3L728.4,284.2L728.8,282.8L729.2,281.9L729.6,281.2L730.0,280.8L730.4,280.5L730.9,280.3L731.3,280.1L731.7,280.0L731.7,280.1L733.0,279.8L734.3,279.5L735.6,280.0L736.9,279.7L738.2,280.0L739.5,279.9L740.8,280.0L742.1,279.6L743.4,280.0L744.4,279.8L744.5,279.8L745.0,269.2L745.7,273.0L746.8,276.6L748.2,278.8L750.0,279.8L750.0,279.6L751.3,279.7L752.6,280.0L753.9,280.0L755.2,279.6L756.5,279.6L757.8,279.7L759.1,279.8L760.4,279.7L761.7,279.6L762.0,279.8L762.4,279.8L762.6,316.7L762.9,300.0L762.9,300.0L763.3,293.6L763.7,289.3L764.1,286.3L764.6,284.2L765.0,282.8L765.4,281.9L765.8,281.2L766.2,280.8L766.6,280.5L767.1,280.3L767.5,280.1L767.9,280.0L767.9,279.7L769.2,279.9L770.5,280.0L771.6,279.8L771.6,279.8M771.6,367.0L771.6,378.0L771.9,368.0L772.9,369.8L774.1,371.0L774.6,370.4L775.7,371.1L776.8,371.4L777.9,370.4L779.0,371.5L780.1,370.5L781.2,371.1L782.3,371.1L783.4,371.2L784.5,370.7L785.6,370.9L786.7,371.1L787.8,370.9L788.9,371.2L790.0,370.9L791.1,370.9L792.2,370.3L793.3,371.2L794.4,371.0L795.5,370.6L796.6,371.4L797.7,371.4L798.8,370.9L799.6,371.0L799.6,371.0L799.9,354.9L800.2,341.6L800.5,330.7L800.8,321.7L801.1,314.3L801.4,308.2L801.6,303.2L801.9,299.0L802.2,295.6L802.5,292.8L802.8,290.5L803.1,288.6L803.4,287.1L803.7,285.8L804.0,284.7L804.3,283.9L804.6,283.1L804.9,282.6L805.1,282.1L805.4,281.7L805.7,281.3L806.0,281.1L806.3,280.8L806.6,280.7L806.7,279.8L808.0,279.8L809.3,279.5L810.6,279.9L811.9,279.6L813.2,279.9L814.5,280.0L815.8,279.8L817.1,279.6L818.4,279.8L819.7,279.7L821.0,280.1L821.0,279.8L821.1,279.8L821.6,269.2L822.3,273.0L823.4,276.6L824.8,278.8L826.6,279.8L826.6,279.6L827.9,280.0L829.2,280.1L830.5,279.9L831.8,280.0L833.1,279.6L834.4,280.1L835.7,279.8L837.0,280.1L838.3,280.0L838.4,279.8L838.8,279.8L839.0,316.7L839.3,300.0L839.3,300.0L839.7,293.6L840.1,289.3L840.5,286.3L841.0,284.2L841.4,282.8L841.8,281.9L842.2,281.2L842.6,280.8L843.0,280.5L843.5,280.3L843.9,280.1L844.3,280.0L844.3,279.6L845.6,280.0L846.9,280.0L847.6,279.8L847.6,279.8M847.6,367.0L847.6,378.0L847.9,368.0L848.9,369.8L850.1,371.0L850.6,370.4L851.7,370.8L852.8,371.4L853.9,370.5L855.0,371.6L856.1,370.7L857.2,371.4L858.3,370.5L859.4,371.0L860.5,371.6L861.6,370.6L862.7,370.7L863.8,371.0L864.9,370.7L866.0,370.4L867.1,370.6L868.2,370.5L869.3,371.6L870.4,371.3L871.5,371.6L872.6,370.5L873.7,371.4L874.8,370.5L875.9,371.0L876.0,371.0L876.0,371.0L876.3,354.9L876.6,341.6L876.9,330.7L877.2,321.7L877.5,314.3L877.8,308.2L878.0,303.2L878.3,299.0L878.6,295.6L878.9,292.8L879.2,290.5L879.5,288.6L879.8,287.1L880.1,285.8L880.4,284.7L880.7,283.9L881.0,283.1L881.2,282.6L881.5,282.1L881.8,281.7L882.1,281.3L882.4,281.1L882.7,280.8L883.0,280.7L883.1,279.6L884.4,280.1L885.7,279.9L887.0,279.7L888.3,280.0L889.6,279.7L890.9,280.1L892.2,279.8L893.5,279.7L894.8,279.9L896.1,279.8L897.4,279.6L898.7,279.9L900.0,279.5L901.3,280.0L902.6,279.7L903.9,279.9L905.2,280.1L906.5,279.8L907.8,279.9L909.1,279.7L910.4,279.5L911.7,279.5L913.0,279.6L914.3,279.9L915.6,279.8L916.9,279.8L918.2,280.0L919.5,279.6L920.8,279.6L922.1,279.9L923.4,279.5L924.7,279.5L926.0,279.7L927.3,279.6L928.6,279.7L929.9,279.6L931.2,279.8L932.5,279.8L933.8,279.6L935.1,279.9L936.4,279.8L937.7,279.6L939.0,280.0L940.3,279.7L941.6,279.6L942.9,279.6L944.2,279.9L945.5,280.0L946.8,280.0L948.1,279.7L949.4,279.7L950.7,279.5L952.0,279.9L953.3,279.8L954.6,279.7L955.9,279.9L957.2,279.8L958.5,280.0L959.8,279.9L961.1,279.7L962.4,280.0L963.7,279.5L965.0,279.8L966.3,279.7L967.6,279.7L968.9,279.6L970.2,280.0L971.5,279.5L972.8,279.8L974.1,280.0L975.4,279.6L976.7,279.6L978.0,279.9L979.3,279.8L980.6,279.9L981.9,280.0L983.2,279.6L984.5,279.7L985.8,279.7L987.1,279.5L988.4,280.0L989.7,280.0L991.0,279.9L992.3,279.5L993.6,280.0L994.9,279.9L996.2,279.8L997.5,279.9L998.8,279.8L1000.1,279.6L1001.4,279.6L1002.7,279.7L1004.0,279.5L1005.3,279.7L1006.6,279.9L1007.9,279.9L1009.2,280.0L1010.5,279.9L1011.8,279.7L1013.1,279.8L1014.4,279.8L1015.7,280.0L1017.0,279.8L1018.3,279.7L1019.6,279.9L1020.9,280.1L1022.2,279.6L1023.5,280.0L1024.8,279.5L1026.1,279.7L1027.4,279.7L1028.7,279.9L1030.0,280.0L1031.3,279.9L1032.6,279.7L1033.9,280.0L1035.2,279.7L1036.5,279.7L1037.8,280.0L1039.1,279.9L1040.4,279.9L1041.7,279.9L1043.0,280.1L1044.3,279.8L1045.6,280.0L1046.9,279.9L1048.2,280.0L1049.5,279.8L1050.8,279.9L1052.1,279.8L1053.4,279.7L1054.7,279.6L1056.0,279.9L1057.3,279.6L1058.6,280.0L1059.9,279.6L1061.2,279.5L1062.5,279.6L1063.8,280.0L1065.1,279.7L1066.4,279.6L1067.7,279.5L1069.0,279.5L1069.0,279.8" stroke="#1fb8c4" stroke-width="1.1" fill="none" stroke-linejoin="round"/>
<path d="M351.0,279.7L352.3,279.8L353.6,279.7L354.9,279.6L356.2,279.6L357.5,279.6L358.8,280.0L360.1,279.8L361.4,279.6L362.7,280.0L364.0,280.1L365.3,279.8L366.6,279.6L367.9,279.6L369.2,279.6L370.5,279.7L371.8,279.6L373.1,279.7L374.4,279.7L375.7,279.8L377.0,280.0L378.3,279.9L379.6,279.8L380.9,279.8L382.2,279.8L383.5,279.7L384.8,279.7L386.1,279.6L387.4,279.7L388.7,280.1L390.0,279.6L391.3,279.8L392.6,279.9L393.9,280.0L395.2,279.6L396.5,279.7L397.8,279.7L399.1,279.7L400.4,279.8L401.7,280.1L403.0,280.0L404.3,280.0L405.6,279.5L406.9,279.5L408.2,279.9L409.5,280.0L410.8,279.8L412.1,279.8L413.4,279.5L414.7,279.7L416.0,280.0L417.3,280.0L418.6,280.0L419.9,280.1L421.2,279.7L422.5,279.6L423.8,279.6L425.1,279.8L426.4,279.9L427.7,280.0L429.0,279.9L430.3,279.9L431.6,279.9L432.9,279.8L434.2,279.8L435.5,279.5L436.8,280.0L438.1,279.7L439.4,280.0L440.7,279.9L442.0,279.7L443.3,279.6L444.6,279.7L445.9,279.9L447.2,279.9L448.5,279.6L449.8,279.6L451.1,279.8L452.4,279.8L453.7,279.7L455.0,279.6L456.3,279.9L457.6,279.5L458.9,279.7L460.2,279.8L461.5,280.1L462.8,279.9L464.1,280.0L465.4,279.8L466.7,279.7L468.0,279.7L469.3,280.1L470.6,279.9L471.9,279.7L473.2,279.5L474.5,279.8L475.8,279.9L477.1,279.8L478.4,279.7L479.7,279.9L481.0,280.0L482.3,279.6L483.6,279.5L484.9,279.7L486.2,279.8L487.5,279.9L488.8,279.6L489.5,279.8L489.5,279.8M492.5,371.6L493.6,370.8L494.7,370.6L495.8,371.6L496.9,371.3L498.0,370.3L499.1,371.2L500.2,370.8L501.3,370.8L502.4,370.8L503.5,370.5L504.6,370.3L505.7,370.7L506.8,370.8L507.9,371.6L509.0,370.5L510.1,371.6L511.2,370.6L512.3,370.8L513.4,371.5L514.5,371.5L515.6,370.9L516.7,370.4L517.0,371.0M524.1,279.5L525.4,279.8L525.7,279.8M531.3,280.0L532.6,279.9L533.9,279.5L535.2,279.5L536.5,279.6L537.8,280.0L539.1,279.7L540.4,279.9L541.7,280.0L543.0,279.7L543.9,279.8M549.8,279.7L551.1,280.1L552.4,279.9L553.7,279.7L555.0,279.9L556.3,279.7L557.6,279.7L558.9,279.5L560.2,279.9L561.5,280.0L562.4,279.8M568.0,279.9L569.3,280.0L570.6,279.5L571.9,279.7L573.2,279.8L574.5,280.1L575.8,280.1L577.1,279.7L578.4,279.7L579.7,279.8L579.9,279.8M585.8,279.8L587.1,280.0L588.4,279.6L589.5,279.8M592.5,371.4L593.6,371.3L594.7,371.5L595.8,371.4L596.9,371.2L598.0,370.8L599.1,370.7L600.2,370.8L601.3,371.4L602.4,370.4L603.5,370.6L604.6,371.4L605.7,370.6L606.8,370.4L607.9,370.3L609.0,371.1L610.1,370.8L611.2,371.7L612.3,371.5L613.4,371.7L614.5,370.7L615.6,370.4L616.7,370.4L617.8,371.0L618.9,371.3L620.0,370.9L621.1,370.6L622.2,370.9L623.3,371.2L624.4,371.2L625.5,371.3L626.6,371.5L627.7,371.2L628.8,370.5L629.9,371.5L631.0,370.7L632.1,371.1L633.2,370.8L634.3,371.3L635.4,370.6L636.5,370.6L637.6,370.6L638.7,370.5L639.8,371.5L640.9,371.1L642.0,370.8L643.1,370.9L644.2,371.7L645.3,371.0L646.4,370.6L647.5,371.4L648.6,371.2L649.7,371.7L650.8,370.4L651.9,371.0L653.0,371.4L654.1,371.5L655.2,371.6L656.3,370.4L657.4,370.7L658.5,370.5L659.6,370.6L660.7,371.7L661.8,371.1L662.9,371.6L664.0,370.8L665.1,371.5L666.2,370.9L667.3,370.7L668.4,371.4L669.5,371.6L670.6,370.4L671.7,371.1L672.8,371.2L673.9,370.6L675.0,370.8L676.1,370.5L677.2,370.6L678.3,370.7L679.4,371.1L680.5,371.2L681.6,370.6L682.7,370.3L683.8,370.8L684.9,371.2L686.0,370.6L687.1,370.7L688.2,370.6L689.3,371.4L690.4,371.1L691.5,370.4L692.6,370.4L693.7,370.9L694.8,371.1L695.9,371.2L697.0,370.4L698.1,370.5L699.0,371.0M706.1,279.8L707.4,279.6L708.0,279.8M713.6,279.7L714.9,279.8L716.2,280.0L717.5,279.6L718.8,279.8L720.1,280.0L721.4,280.1L722.7,279.6L724.0,279.6L725.3,280.0L725.8,279.8M731.7,280.1L733.0,279.8L734.3,279.5L735.6,280.0L736.9,279.7L738.2,280.0L739.5,279.9L740.8,280.0L742.1,279.6L743.4,280.0L744.4,279.8M750.0,279.6L751.3,279.7L752.6,280.0L753.9,280.0L755.2,279.6L756.5,279.6L757.8,279.7L759.1,279.8L760.4,279.7L761.7,279.6L762.0,279.8M767.9,279.7L769.2,279.9L770.5,280.0L771.6,279.8M774.6,370.4L775.7,371.1L776.8,371.4L777.9,370.4L779.0,371.5L780.1,370.5L781.2,371.1L782.3,371.1L783.4,371.2L784.5,370.7L785.6,370.9L786.7,371.1L787.8,370.9L788.9,371.2L790.0,370.9L791.1,370.9L792.2,370.3L793.3,371.2L794.4,371.0L795.5,370.6L796.6,371.4L797.7,371.4L798.8,370.9L799.6,371.0M806.7,279.8L808.0,279.8L809.3,279.5L810.6,279.9L811.9,279.6L813.2,279.9L814.5,280.0L815.8,279.8L817.1,279.6L818.4,279.8L819.7,279.7L821.0,280.1L821.0,279.8M826.6,279.6L827.9,280.0L829.2,280.1L830.5,279.9L831.8,280.0L833.1,279.6L834.4,280.1L835.7,279.8L837.0,280.1L838.3,280.0L838.4,279.8M844.3,279.6L845.6,280.0L846.9,280.0L847.6,279.8M850.6,370.4L851.7,370.8L852.8,371.4L853.9,370.5L855.0,371.6L856.1,370.7L857.2,371.4L858.3,370.5L859.4,371.0L860.5,371.6L861.6,370.6L862.7,370.7L863.8,371.0L864.9,370.7L866.0,370.4L867.1,370.6L868.2,370.5L869.3,371.6L870.4,371.3L871.5,371.6L872.6,370.5L873.7,371.4L874.8,370.5L875.9,371.0L876.0,371.0M883.1,279.6L884.4,280.1L885.7,279.9L887.0,279.7L888.3,280.0L889.6,279.7L890.9,280.1L892.2,279.8L893.5,279.7L894.8,279.9L896.1,279.8L897.4,279.6L898.7,279.9L900.0,279.5L901.3,280.0L902.6,279.7L903.9,279.9L905.2,280.1L906.5,279.8L907.8,279.9L909.1,279.7L910.4,279.5L911.7,279.5L913.0,279.6L914.3,279.9L915.6,279.8L916.9,279.8L918.2,280.0L919.5,279.6L920.8,279.6L922.1,279.9L923.4,279.5L924.7,279.5L926.0,279.7L927.3,279.6L928.6,279.7L929.9,279.6L931.2,279.8L932.5,279.8L933.8,279.6L935.1,279.9L936.4,279.8L937.7,279.6L939.0,280.0L940.3,279.7L941.6,279.6L942.9,279.6L944.2,279.9L945.5,280.0L946.8,280.0L948.1,279.7L949.4,279.7L950.7,279.5L952.0,279.9L953.3,279.8L954.6,279.7L955.9,279.9L957.2,279.8L958.5,280.0L959.8,279.9L961.1,279.7L962.4,280.0L963.7,279.5L965.0,279.8L966.3,279.7L967.6,279.7L968.9,279.6L970.2,280.0L971.5,279.5L972.8,279.8L974.1,280.0L975.4,279.6L976.7,279.6L978.0,279.9L979.3,279.8L980.6,279.9L981.9,280.0L983.2,279.6L984.5,279.7L985.8,279.7L987.1,279.5L988.4,280.0L989.7,280.0L991.0,279.9L992.3,279.5L993.6,280.0L994.9,279.9L996.2,279.8L997.5,279.9L998.8,279.8L1000.1,279.6L1001.4,279.6L1002.7,279.7L1004.0,279.5L1005.3,279.7L1006.6,279.9L1007.9,279.9L1009.2,280.0L1010.5,279.9L1011.8,279.7L1013.1,279.8L1014.4,279.8L1015.7,280.0L1017.0,279.8L1018.3,279.7L1019.6,279.9L1020.9,280.1L1022.2,279.6L1023.5,280.0L1024.8,279.5L1026.1,279.7L1027.4,279.7L1028.7,279.9L1030.0,280.0L1031.3,279.9L1032.6,279.7L1033.9,280.0L1035.2,279.7L1036.5,279.7L1037.8,280.0L1039.1,279.9L1040.4,279.9L1041.7,279.9L1043.0,280.1L1044.3,279.8L1045.6,280.0L1046.9,279.9L1048.2,280.0L1049.5,279.8L1050.8,279.9L1052.1,279.8L1053.4,279.7L1054.7,279.6L1056.0,279.9L1057.3,279.6L1058.6,280.0L1059.9,279.6L1061.2,279.5L1062.5,279.6L1063.8,280.0L1065.1,279.7L1066.4,279.6L1067.7,279.5L1069.0,279.5L1069.0,279.8" stroke="#1fb8c4" stroke-width="1.6" fill="none" stroke-linejoin="round"/>
<path d="M489.5,279.8L489.5,372.0M589.5,279.8L589.5,372.0M771.6,279.8L771.6,372.0M847.6,279.8L847.6,372.0" stroke="#1fb8c4" stroke-width="1" fill="none" opacity="0.6"/>
<path d="M354.0,277.3V281.7M363.4,277.7V280.9M372.8,277.1V281.1M382.2,277.3V281.0M391.6,278.0V281.8M401.0,277.9V282.0M410.4,277.7V280.9M419.8,278.0V281.3M429.2,277.5V282.0M438.6,278.1V281.2M448.0,278.0V282.1M457.4,278.1V280.7M466.8,278.2V281.2M476.2,277.2V281.9M485.6,277.4V282.1M495.8,369.3V372.2M503.0,368.9V372.0M510.2,369.4V372.9M595.8,369.1V372.2M603.0,369.5V372.1M610.2,368.8V372.1M617.4,369.2V372.2M624.6,369.4V372.8M631.8,368.8V372.2M639.0,369.6V372.6M646.2,369.6V371.7M653.4,368.9V372.3M660.6,369.0V372.2M667.8,368.9V372.3M675.0,369.6V371.7M682.2,369.2V372.5M689.4,368.9V371.8M696.6,369.2V372.2M777.9,369.6V372.3M785.1,369.7V371.9M792.3,369.4V371.8M853.9,369.2V372.2M861.1,368.9V372.4M868.3,369.2V372.8M890.0,277.4V281.6M899.4,277.4V281.7M908.8,278.2V281.5M918.2,277.8V281.8M927.6,277.3V282.0M937.0,278.2V281.9M946.4,277.2V282.0M955.8,278.2V280.9M965.2,278.2V280.7M974.6,277.2V281.8M984.0,277.5V281.9M993.4,277.5V281.1M1002.8,278.2V280.8M1012.2,277.4V280.9M1021.6,277.9V281.3M1031.0,278.3V281.0M1040.4,277.9V281.7M1049.8,277.8V281.1M1059.2,277.1V281.4M507.4,369.0V382.6M617.6,369.0V382.4M653.6,369.0V382.4M689.6,369.0V383.2M799.3,369.0V382.7" stroke="#1fb8c4" stroke-width="0.9" fill="none" opacity="0.9"/>
<rect x="351" y="512.9" width="176" height="3" fill="#ff00ff"/>
<rect x="820" y="512.9" width="249" height="3" fill="#ff00ff"/>
<polygon points="526.2,514.4 530.2,505.6 816,505.6 820.2,514.4 816,523.3 530.2,523.3" fill="#000" stroke="#8c8408" stroke-width="1.1"/>
<path d="M489.5,505.8V523.7" stroke="#1fd23a" stroke-width="1.2"/>
<path d="M876.7,505.5V523.6" stroke="#e01818" stroke-width="1.2"/>
<rect x="389.2" y="508" width="27.8" height="12.6" fill="#2c2c2c" fill-opacity="0.86" stroke="#484848" stroke-width="1"/>
<path d="M398.6,514.4H407.6M403.1,510.2V518.8" stroke="#8a8a8a" stroke-width="1.3"/>
</g>
<path d="M355.5,140.8H397.8Q399.6,140.8 400.4,142.4L404.6,150.6L400.4,158.8Q399.6,160.4 397.8,160.4H355.5Q353,160.4 353,157.9V143.3Q353,140.8 355.5,140.8Z" fill="#1c1a06" stroke="#e9e11c" stroke-width="1.3"/>
<path d="M372.2,140.8V160.4" stroke="#e9e11c" stroke-width="1.3"/>
<path d="M355,361.7H369.6Q370.8,361.7 371.6,362.6L379.2,371.1L371.6,379.6Q370.8,380.5 369.6,380.5H355Q352.7,380.5 352.7,378.2V364Q352.7,361.7 355,361.7Z" fill="#061a1c" stroke="#1aa8b6" stroke-width="1.3"/>
<path d="M355.2,505.6H369.6Q370.8,505.6 371.6,506.5L379.2,514.3L371.6,522.1Q370.8,523 369.6,523H355.2Q353,523 353,520.8V507.8Q353,505.6 355.2,505.6Z" fill="#cb99fb"/>
<path d="M472.4,142.5H498.8L507.6,149L498.8,155.5H472.4Z" fill="none" stroke="#c87622" stroke-width="1"/>
<path d="M579.4,142.5H553L544.3,149L553,155.5H579.4Z" fill="none" stroke="#c87622" stroke-width="1"/>
<polygon points="775.2,54.4 788,54.4 781.6,60.6" fill="#ff8c1e"/>
<path d="M775.6,426.4H787.4V438.3H783.8L781.5,442.4L779.2,438.3H775.6Z" fill="#000" stroke="#ff8c1e" stroke-width="1.4"/>
<polygon points="1039,59 1064.4,59 1064.4,84.4" fill="#585858"/>
<circle cx="1058.6" cy="64.6" r="2.9" fill="none" stroke="#c8c8c8" stroke-width="1.2"/><path d="M1056.6,66.8L1052,71.6" stroke="#c8c8c8" stroke-width="1.5" stroke-linecap="round"/>
<path d="M594,39.5H591.5V49.5H594M826,39.5H828.5V49.5H826" stroke="#b9b9b9" stroke-width="1" fill="none"/>
<path d="M591,44.8H829" stroke="#8f8f8f" stroke-width="1.6"/>
<polygon points="729.6,36 738.6,36 734.1,39.8" fill="#ff8c1e"/>
<path d="M730.4,43.4H737.6V50.2H735.4L734,52L732.6,50.2H730.4Z" fill="#1a1006" stroke="#ff8c1e" stroke-width="1"/>
</svg>
<div id="t18" class="t" style="left:356.50px;top:142.86px;font:400 8px/16px 'DejaVu Sans','Liberation Sans',sans-serif;color:#e9e11c;transform:scaleX(0.9456);transform-origin:left center;">C 1</div>
<div id="t19" class="t" style="left:375.50px;top:142.86px;font:400 8px/16px 'DejaVu Sans','Liberation Sans',sans-serif;color:#e9e11c;transform:scaleX(0.9099);transform-origin:left center;">2.38 V</div>
<div id="t20" class="t" style="left:360.60px;top:364.26px;font:400 8px/16px 'DejaVu Sans','Liberation Sans',sans-serif;color:#22b4c2;transform:scaleX(0.9078);transform-origin:left center;">C 2</div>
<div id="t21" class="t" style="left:359.90px;top:506.68px;font:400 9px/16px 'DejaVu Sans','Liberation Sans',sans-serif;color:#2a1638;transform:scaleX(0.9239);transform-origin:left center;">B1</div>
<div id="t22" class="t" style="left:382.40px;top:494.12px;font:400 11px/16px 'DejaVu Sans','Liberation Sans',sans-serif;color:#c99af2;transform:scaleX(0.9477);transform-origin:left center;">I2C</div>
<div id="t23" class="t" style="left:476.20px;top:140.98px;font:400 9.2px/16px 'DejaVu Sans','Liberation Sans',sans-serif;color:#d27a28;transform:scaleX(0.9424);transform-origin:left center;">50 %</div>
<div id="t24" class="t" style="left:553.60px;top:140.98px;font:400 9.2px/16px 'DejaVu Sans','Liberation Sans',sans-serif;color:#d27a28;transform:scaleX(0.9424);transform-origin:left center;">50 %</div>
<div id="t25" class="t" style="left:631.50px;width:300px;text-align:center;top:424.58px;font:400 9px/16px 'DejaVu Sans','Liberation Sans',sans-serif;color:#ff8c1e;">T</div>
<div id="t26" class="t" style="left:584.00px;width:300px;text-align:center;top:39.02px;font:700 6px/16px 'DejaVu Sans','Liberation Sans',sans-serif;color:#ff8c1e;">T</div>
<div id="t27" class="t" style="left:605.00px;top:506.52px;font:700 16px/16px 'DejaVu Sans','Liberation Sans',sans-serif;color:#ffffff;transform:scaleX(0.9829);transform-origin:left center;">Addr:63h:Write</div>
<div id="t28" class="t" style="right:134.20px;top:76.47px;font:400 8.3px/16px 'DejaVu Sans','Liberation Sans',sans-serif;color:#e3d81c;transform:scaleX(1.0446);transform-origin:right center;">6 V</div>
<div id="t29" class="t" style="right:134.20px;top:253.07px;font:400 8.3px/16px 'DejaVu Sans','Liberation Sans',sans-serif;color:#1fb0bc;transform:scaleX(1.0446);transform-origin:right center;">6 V</div>
<div id="t30" class="t" style="right:134.20px;top:94.92px;font:400 8.3px/16px 'DejaVu Sans','Liberation Sans',sans-serif;color:#e3d81c;transform:scaleX(1.0446);transform-origin:right center;">5 V</div>
<div id="t31" class="t" style="right:134.20px;top:271.47px;font:400 8.3px/16px 'DejaVu Sans','Liberation Sans',sans-serif;color:#1fb0bc;transform:scaleX(1.0446);transform-origin:right center;">5 V</div>
<div id="t32" class="t" style="right:134.20px;top:113.37px;font:400 8.3px/16px 'DejaVu Sans','Liberation Sans',sans-serif;color:#e3d81c;transform:scaleX(1.0446);transform-origin:right center;">4 V</div>
<div id="t33" class="t" style="right:134.20px;top:289.87px;font:400 8.3px/16px 'DejaVu Sans','Liberation Sans',sans-serif;color:#1fb0bc;transform:scaleX(1.0446);transform-origin:right center;">4 V</div>
<div id="t34" class="t" style="right:134.20px;top:131.82px;font:400 8.3px/16px 'DejaVu Sans','Liberation Sans',sans-serif;color:#e3d81c;transform:scaleX(1.0446);transform-origin:right center;">3 V</div>
<div id="t35" class="t" style="right:134.20px;top:308.27px;font:400 8.3px/16px 'DejaVu Sans','Liberation Sans',sans-serif;color:#1fb0bc;transform:scaleX(1.0446);transform-origin:right center;">3 V</div>
<div id="t36" class="t" style="right:134.20px;top:150.27px;font:400 8.3px/16px 'DejaVu Sans','Liberation Sans',sans-serif;color:#e3d81c;transform:scaleX(1.0446);transform-origin:right center;">2 V</div>
<div id="t37" class="t" style="right:134.20px;top:326.67px;font:400 8.3px/16px 'DejaVu Sans','Liberation Sans',sans-serif;color:#1fb0bc;transform:scaleX(1.0446);transform-origin:right center;">2 V</div>
<div id="t38" class="t" style="right:134.20px;top:168.72px;font:400 8.3px/16px 'DejaVu Sans','Liberation Sans',sans-serif;color:#e3d81c;transform:scaleX(1.0446);transform-origin:right center;">1 V</div>
<div id="t39" class="t" style="right:134.20px;top:345.07px;font:400 8.3px/16px 'DejaVu Sans','Liberation Sans',sans-serif;color:#1fb0bc;transform:scaleX(1.0446);transform-origin:right center;">1 V</div>
<div id="t40" class="t" style="right:134.20px;top:187.17px;font:400 8.3px/16px 'DejaVu Sans','Liberation Sans',sans-serif;color:#e3d81c;transform:scaleX(1.0446);transform-origin:right center;">0 V</div>
<div id="t41" class="t" style="right:134.20px;top:363.47px;font:400 8.3px/16px 'DejaVu Sans','Liberation Sans',sans-serif;color:#1fb0bc;transform:scaleX(1.0446);transform-origin:right center;">0 V</div>
<div id="t42" class="t" style="right:134.20px;top:205.62px;font:400 8.3px/16px 'DejaVu Sans','Liberation Sans',sans-serif;color:#e3d81c;transform:scaleX(1.0606);transform-origin:right center;">-1 V</div>
<div id="t43" class="t" style="right:134.20px;top:381.87px;font:400 8.3px/16px 'DejaVu Sans','Liberation Sans',sans-serif;color:#1fb0bc;transform:scaleX(1.0606);transform-origin:right center;">-1 V</div>
<div id="t44" class="t" style="right:134.20px;top:224.07px;font:400 8.3px/16px 'DejaVu Sans','Liberation Sans',sans-serif;color:#e3d81c;transform:scaleX(1.0606);transform-origin:right center;">-2 V</div>
<div id="t45" class="t" style="right:134.20px;top:400.27px;font:400 8.3px/16px 'DejaVu Sans','Liberation Sans',sans-serif;color:#1fb0bc;transform:scaleX(1.0606);transform-origin:right center;">-2 V</div>
<div class="a" style="left:405.6px;top:590px;width:34.3px;height:12.8px;background:#000;"></div>
<div id="t46" class="t" style="left:272.70px;width:300px;text-align:center;top:587.77px;font:400 8.5px/16px 'DejaVu Sans','Liberation Sans',sans-serif;color:#c2c2c2;transform:scaleX(1.0143);transform-origin:center center;">-100 µs</div>
<div class="a" style="left:479.7px;top:590px;width:29.6px;height:12.8px;background:#000;"></div>
<div id="t47" class="t" style="left:344.50px;width:300px;text-align:center;top:587.77px;font:400 8.5px/16px 'DejaVu Sans','Liberation Sans',sans-serif;color:#c2c2c2;transform:scaleX(1.0446);transform-origin:center center;">-80 µs</div>
<div class="a" style="left:551.5px;top:590px;width:29.6px;height:12.8px;background:#000;"></div>
<div id="t48" class="t" style="left:416.30px;width:300px;text-align:center;top:587.77px;font:400 8.5px/16px 'DejaVu Sans','Liberation Sans',sans-serif;color:#c2c2c2;transform:scaleX(1.0446);transform-origin:center center;">-60 µs</div>
<div class="a" style="left:623.3px;top:590px;width:29.6px;height:12.8px;background:#000;"></div>
<div id="t49" class="t" style="left:488.10px;width:300px;text-align:center;top:587.77px;font:400 8.5px/16px 'DejaVu Sans','Liberation Sans',sans-serif;color:#c2c2c2;transform:scaleX(1.0446);transform-origin:center center;">-40 µs</div>
<div class="a" style="left:695.1px;top:590px;width:29.6px;height:12.8px;background:#000;"></div>
<div id="t50" class="t" style="left:559.90px;width:300px;text-align:center;top:587.77px;font:400 8.5px/16px 'DejaVu Sans','Liberation Sans',sans-serif;color:#c2c2c2;transform:scaleX(1.0446);transform-origin:center center;">-20 µs</div>
<div id="t51" class="t" style="left:631.70px;width:300px;text-align:center;top:587.77px;font:400 8.5px/16px 'DejaVu Sans','Liberation Sans',sans-serif;color:#c2c2c2;transform:scaleX(0.9245);transform-origin:center center;">0 s</div>
<div class="a" style="left:840.4px;top:590px;width:26.2px;height:12.8px;background:#000;"></div>
<div id="t52" class="t" style="left:703.50px;width:300px;text-align:center;top:587.77px;font:400 8.5px/16px 'DejaVu Sans','Liberation Sans',sans-serif;color:#c2c2c2;transform:scaleX(1.0360);transform-origin:center center;">20 µs</div>
<div class="a" style="left:912.2px;top:590px;width:26.2px;height:12.8px;background:#000;"></div>
<div id="t53" class="t" style="left:775.30px;width:300px;text-align:center;top:587.77px;font:400 8.5px/16px 'DejaVu Sans','Liberation Sans',sans-serif;color:#c2c2c2;transform:scaleX(1.0360);transform-origin:center center;">40 µs</div>
<div class="a" style="left:984.0px;top:590px;width:26.2px;height:12.8px;background:#000;"></div>
<div id="t54" class="t" style="left:847.10px;width:300px;text-align:center;top:587.77px;font:400 8.5px/16px 'DejaVu Sans','Liberation Sans',sans-serif;color:#c2c2c2;transform:scaleX(1.0360);transform-origin:center center;">60 µs</div>
<div class="a" style="left:1080px;top:32px;width:114px;height:574px;border:1px solid #47423f;border-right:none;background:#2e2e2e;"></div>
<div id="t55" class="t" style="left:987.80px;width:300px;text-align:center;top:32.44px;font:700 12px/16px 'Liberation Sans','DejaVu Sans',sans-serif;color:#f2f2f2;transform:scaleX(1.0264);transform-origin:center center;-webkit-text-stroke:0.3px #f2f2f2;">Add New...</div>
<div class="btn" style="left:1086.6px;top:51.2px;width:48px;height:28px;"></div>
<div id="t56" class="t" style="left:960.60px;width:300px;text-align:center;top:56.31px;font:400 10.3px/16px 'DejaVu Sans','Liberation Sans',sans-serif;color:#f0f0f0;transform:scaleX(0.9638);transform-origin:center center;">Cursors</div>
<div class="btn" style="left:1141.2px;top:51.2px;width:47.6px;height:28px;"></div>
<div id="t57" class="t" style="left:1015.00px;width:300px;text-align:center;top:56.31px;font:400 10.3px/16px 'DejaVu Sans','Liberation Sans',sans-serif;color:#f0f0f0;transform:scaleX(1.0196);transform-origin:center center;">Callout</div>
<div class="btn" style="left:1086.6px;top:86px;width:48px;height:28px;"></div>
<div id="t58" class="t" style="left:960.60px;width:300px;text-align:center;top:91.11px;font:400 10.3px/16px 'DejaVu Sans','Liberation Sans',sans-serif;color:#f0f0f0;transform:scaleX(1.0099);transform-origin:center center;">Measure</div>
<div class="btn" style="left:1141.2px;top:86px;width:47.6px;height:28px;"></div>
<div id="t59" class="t" style="left:1015.00px;width:300px;text-align:center;top:91.11px;font:400 10.3px/16px 'DejaVu Sans','Liberation Sans',sans-serif;color:#f0f0f0;transform:scaleX(0.9551);transform-origin:center center;">Search</div>
<div class="btn" style="left:1086.6px;top:120.6px;width:48px;height:28px;"></div>
<div class="btn" style="left:1141.2px;top:120.6px;width:47.6px;height:28px;"></div>
<div id="t60" class="t" style="left:1015.00px;width:300px;text-align:center;top:125.71px;font:400 10.3px/16px 'DejaVu Sans','Liberation Sans',sans-serif;color:#f0f0f0;transform:scaleX(1.0607);transform-origin:center center;">Plot</div>
<div class="btn" style="left:1086.6px;top:158.6px;width:48px;height:28px;"></div>
<div class="btn" style="left:1141.2px;top:158.6px;width:47.6px;height:28px;"></div>
<div id="t61" class="t" style="left:1015.00px;width:300px;text-align:center;top:163.71px;font:400 10.3px/16px 'DejaVu Sans','Liberation Sans',sans-serif;color:#f0f0f0;transform:scaleX(1.0464);transform-origin:center center;">More...</div>
<div id="t62" class="t" style="left:960.60px;width:300px;text-align:center;top:119.51px;font:400 10.3px/16px 'DejaVu Sans','Liberation Sans',sans-serif;color:#f0f0f0;transform:scaleX(0.9681);transform-origin:center center;">Results</div>
<div id="t63" class="t" style="left:960.60px;width:300px;text-align:center;top:131.51px;font:400 10.3px/16px 'DejaVu Sans','Liberation Sans',sans-serif;color:#f0f0f0;transform:scaleX(0.9947);transform-origin:center center;">Table</div>
<div class="a" style="left:1084px;top:153.3px;width:108px;height:1px;background:#4d4743;"></div>
<div class="a" style="left:1084px;top:191.8px;width:108px;height:1px;background:#4d4743;"></div>
<svg width="1200" height="675" viewBox="0 0 1200 675" style="pointer-events:none"><rect x="1103.4" y="165.6" width="13.4" height="12.2" fill="none" stroke="#a9a9a9" stroke-width="1" stroke-dasharray="2.2 1.6"/><circle cx="1111.6" cy="170.2" r="3" fill="none" stroke="#bdbdbd" stroke-width="1.1"/><path d="M1109.4,172.6L1106.2,175.6" stroke="#bdbdbd" stroke-width="1.3" stroke-linecap="round"/><path d="M1114.2,174.2L1119,176.4L1116.8,177L1118.4,179.6L1117.4,180.2L1115.8,177.6L1114.4,179Z" fill="#c4c4c4"/><circle cx="1076" cy="314.2" r="1.1" fill="#b4b4b4"/><circle cx="1076" cy="318.6" r="1.1" fill="#b4b4b4"/><circle cx="1076" cy="323" r="1.1" fill="#b4b4b4"/></svg>
<div class="badge" style="left:1084px;top:201.2px;width:107.8px;height:40.8px;"><div class="hd" style="height:13.4px;background:#5b5b5b;"></div></div>
<div class="badge" style="left:1084px;top:249.2px;width:107.8px;height:40.6px;"><div class="hd" style="height:12.8px;background:#000;"></div></div>
<div id="t64" class="t" style="left:1087.80px;top:199.12px;font:400 11px/16px 'Liberation Sans','DejaVu Sans',sans-serif;color:#f1f1f1;transform:scaleX(0.9867);transform-origin:left center;-webkit-text-stroke:0.3px #f1f1f1;">Meas 1</div>
<div class="a" style="left:1170.6px;top:204.39999999999998px;width:16.8px;height:8.2px;border-radius:4.2px;background:#efe81c;"></div>
<div id="t65" class="t" style="left:1029.00px;width:300px;text-align:center;top:200.75px;font:400 7.5px/16px 'DejaVu Sans','Liberation Sans',sans-serif;color:#222;">1</div>
<div id="t66" class="t" style="left:1087.60px;top:214.01px;font:400 10.5px/16px 'Liberation Sans','DejaVu Sans',sans-serif;color:#1a1a1a;transform:scaleX(0.9655);transform-origin:left center;">Frequency</div>
<div id="t67" class="t" style="left:1087.60px;top:227.81px;font:400 10.5px/16px 'Liberation Sans','DejaVu Sans',sans-serif;color:#1a1a1a;transform:scaleX(1.0626);transform-origin:left center;">µ': 97.62 kHz</div>
<div id="t68" class="t" style="left:1087.80px;top:247.12px;font:400 11px/16px 'Liberation Sans','DejaVu Sans',sans-serif;color:#f0e61e;transform:scaleX(0.9867);transform-origin:left center;-webkit-text-stroke:0.3px #f0e61e;">Meas 2</div>
<div class="a" style="left:1170.6px;top:252.39999999999998px;width:16.8px;height:8.2px;border-radius:4.2px;background:#efe81c;"></div>
<div id="t69" class="t" style="left:1029.00px;width:300px;text-align:center;top:248.75px;font:400 7.5px/16px 'DejaVu Sans','Liberation Sans',sans-serif;color:#222;">1</div>
<div id="t70" class="t" style="left:1087.60px;top:261.11px;font:400 10.5px/16px 'Liberation Sans','DejaVu Sans',sans-serif;color:#1a1a1a;transform:scaleX(0.9618);transform-origin:left center;">Period</div>
<div id="t71" class="t" style="left:1087.60px;top:274.91px;font:400 10.5px/16px 'Liberation Sans','DejaVu Sans',sans-serif;color:#1a1a1a;transform:scaleX(1.0590);transform-origin:left center;">µ': 10.25 µs</div>
<div class="badge" style="left:9.1px;top:612.3px;width:67.1px;height:54.9px;"><div class="hd" style="height:13.4px;background:#4b4622;"></div></div>
<div id="t72" class="t" style="left:12.80px;top:610.33px;font:400 11.4px/16px 'Liberation Sans','DejaVu Sans',sans-serif;color:#f2e71f;transform:scaleX(0.8977);transform-origin:left center;-webkit-text-stroke:0.3px #f2e71f;">Ch 1</div>
<div id="t73" class="t" style="left:13.40px;top:625.21px;font:400 10.5px/16px 'Liberation Sans','DejaVu Sans',sans-serif;color:#1a1a1a;">1 V/div</div>
<div id="t74" class="t" style="left:13.00px;top:653.01px;font:400 10.5px/16px 'Liberation Sans','DejaVu Sans',sans-serif;color:#1a1a1a;transform:scaleX(1.0425);transform-origin:left center;">200 MHz</div>
<div class="badge" style="left:80.1px;top:612.3px;width:67.4px;height:54.9px;"><div class="hd" style="height:13.4px;background:#1f4547;"></div></div>
<div id="t75" class="t" style="left:83.80px;top:610.33px;font:400 11.4px/16px 'Liberation Sans','DejaVu Sans',sans-serif;color:#1fc2cc;transform:scaleX(0.8977);transform-origin:left center;-webkit-text-stroke:0.3px #1fc2cc;">Ch 2</div>
<div id="t76" class="t" style="left:84.40px;top:625.21px;font:400 10.5px/16px 'Liberation Sans','DejaVu Sans',sans-serif;color:#1a1a1a;">1 V/div</div>
<div id="t77" class="t" style="left:84.00px;top:653.01px;font:400 10.5px/16px 'Liberation Sans','DejaVu Sans',sans-serif;color:#1a1a1a;transform:scaleX(1.0425);transform-origin:left center;">200 MHz</div>
<div class="badge" style="left:151px;top:612.3px;width:68.0px;height:54.9px;"><div class="hd" style="height:13.4px;background:#a06db4;"></div></div>
<div id="t78" class="t" style="left:154.70px;top:610.33px;font:400 11.4px/16px 'Liberation Sans','DejaVu Sans',sans-serif;color:#140a1a;transform:scaleX(0.9197);transform-origin:left center;-webkit-text-stroke:0.3px #140a1a;">Bus 1</div>
<div id="t79" class="t" style="left:154.90px;top:625.21px;font:400 10.5px/16px 'Liberation Sans','DejaVu Sans',sans-serif;color:#1a1a1a;transform:scaleX(0.8933);transform-origin:left center;">I2C</div>
<svg width="1200" height="675" viewBox="0 0 1200 675" style="pointer-events:none"><path d="M12.3,650.4C10.8,645.8 13.600000000000001,642.3 16.6,642.6C19.6,642.8 21.4,644.8 21.4,646.6" fill="none" stroke="#505050" stroke-width="1.35"/><path d="M14.8,647.2C15.4,644.6 18.4,644.6 19.0,646.8" fill="none" stroke="#505050" stroke-width="1.3"/><rect x="20.6" y="646.6" width="3.2" height="4.2" rx="0.9" fill="#dcdcdc" stroke="#5c5c5c" stroke-width="0.9"/><path d="M83.30000000000001,650.4C81.80000000000001,645.8 84.60000000000001,642.3 87.60000000000001,642.6C90.60000000000001,642.8 92.4,644.8 92.4,646.6" fill="none" stroke="#505050" stroke-width="1.35"/><path d="M85.80000000000001,647.2C86.4,644.6 89.4,644.6 90.0,646.8" fill="none" stroke="#505050" stroke-width="1.3"/><rect x="91.60000000000001" y="646.6" width="3.2" height="4.2" rx="0.9" fill="#dcdcdc" stroke="#5c5c5c" stroke-width="0.9"/></svg>
<div class="btn" style="left:437.2px;top:607.9px;width:30.4px;height:59.7px;border-radius:5px;"></div>
<div class="a" style="left:440.4px;top:613.7px;width:24.0px;height:2.2px;background:#e0405a;border-radius:1px;"></div>
<div id="t80" class="t" style="left:302.40px;width:300px;text-align:center;top:633.32px;font:400 16px/16px 'DejaVu Sans','Liberation Sans',sans-serif;color:#dcdcdc;transform:scaleX(0.9325);transform-origin:center center;">3</div>
<div class="btn" style="left:471px;top:607.9px;width:30.1px;height:59.7px;border-radius:5px;"></div>
<div class="a" style="left:474.2px;top:613.7px;width:23.7px;height:2.2px;background:#86c61e;border-radius:1px;"></div>
<div id="t81" class="t" style="left:336.05px;width:300px;text-align:center;top:633.32px;font:400 16px/16px 'DejaVu Sans','Liberation Sans',sans-serif;color:#dcdcdc;transform:scaleX(0.9325);transform-origin:center center;">4</div>
<div class="btn" style="left:517px;top:607.9px;width:29.6px;height:59.7px;border-radius:5px;"></div>
<div class="a" style="left:520.2px;top:613.7px;width:23.2px;height:2.2px;background:#e8801e;border-radius:1px;"></div>
<div class="btn" style="left:550.6px;top:607.9px;width:29.8px;height:59.7px;border-radius:5px;"></div>
<div class="a" style="left:553.8000000000001px;top:613.7px;width:23.4px;height:2.2px;background:#b9b9cf;border-radius:1px;"></div>
<div class="btn" style="left:584.6px;top:607.9px;width:29.6px;height:59.7px;border-radius:5px;"></div>
<div class="a" style="left:587.8000000000001px;top:613.7px;width:23.2px;height:2.2px;background:#b457e6;border-radius:1px;"></div>
<div class="btn" style="left:630.2px;top:607.9px;width:29.6px;height:59.7px;border-radius:5px;"></div>
<div class="a" style="left:633.4000000000001px;top:613.7px;width:23.2px;height:2.2px;background:#474747;border-radius:1px;"></div>
<div id="t82" class="t" style="left:495.00px;width:300px;text-align:center;top:632.01px;font:400 10.3px/16px 'DejaVu Sans','Liberation Sans',sans-serif;color:#e4e4e4;transform:scaleX(0.9456);transform-origin:center center;">DVM</div>
<div class="btn" style="left:667.4px;top:607.9px;width:29.8px;height:59.7px;border-radius:5px;"></div>
<div class="a" style="left:670.6px;top:613.7px;width:23.4px;height:2.2px;background:#474747;border-radius:1px;"></div>
<div id="t83" class="t" style="left:532.30px;width:300px;text-align:center;top:632.01px;font:400 10.3px/16px 'DejaVu Sans','Liberation Sans',sans-serif;color:#e4e4e4;">AFG</div>
<div id="t84" class="t" style="left:381.80px;width:300px;text-align:center;top:619.91px;font:400 10.3px/16px 'DejaVu Sans','Liberation Sans',sans-serif;color:#e4e4e4;transform:scaleX(0.9831);transform-origin:center center;">Add</div>
<div id="t85" class="t" style="left:381.80px;width:300px;text-align:center;top:631.81px;font:400 10.3px/16px 'DejaVu Sans','Liberation Sans',sans-serif;color:#e4e4e4;transform:scaleX(0.9613);transform-origin:center center;">New</div>
<div id="t86" class="t" style="left:381.80px;width:300px;text-align:center;top:643.71px;font:400 10.3px/16px 'DejaVu Sans','Liberation Sans',sans-serif;color:#e4e4e4;transform:scaleX(0.9780);transform-origin:center center;">Math</div>
<div id="t87" class="t" style="left:415.50px;width:300px;text-align:center;top:619.91px;font:400 10.3px/16px 'DejaVu Sans','Liberation Sans',sans-serif;color:#e4e4e4;transform:scaleX(0.9831);transform-origin:center center;">Add</div>
<div id="t88" class="t" style="left:415.50px;width:300px;text-align:center;top:631.81px;font:400 10.3px/16px 'DejaVu Sans','Liberation Sans',sans-serif;color:#e4e4e4;transform:scaleX(0.9613);transform-origin:center center;">New</div>
<div id="t89" class="t" style="left:415.50px;width:300px;text-align:center;top:643.71px;font:400 10.3px/16px 'DejaVu Sans','Liberation Sans',sans-serif;color:#e4e4e4;transform:scaleX(0.9366);transform-origin:center center;">Ref</div>
<div id="t90" class="t" style="left:449.40px;width:300px;text-align:center;top:619.91px;font:400 10.3px/16px 'DejaVu Sans','Liberation Sans',sans-serif;color:#e4e4e4;transform:scaleX(0.9831);transform-origin:center center;">Add</div>
<div id="t91" class="t" style="left:449.40px;width:300px;text-align:center;top:631.81px;font:400 10.3px/16px 'DejaVu Sans','Liberation Sans',sans-serif;color:#e4e4e4;transform:scaleX(0.9613);transform-origin:center center;">New</div>
<div id="t92" class="t" style="left:449.40px;width:300px;text-align:center;top:643.71px;font:400 10.3px/16px 'DejaVu Sans','Liberation Sans',sans-serif;color:#e4e4e4;transform:scaleX(0.9173);transform-origin:center center;">Bus</div>
<div class="a" style="left:508.8px;top:609px;width:1px;height:58px;background:#474747;"></div>
<div class="a" style="left:622.0px;top:609px;width:1px;height:58px;background:#474747;"></div>
<div class="a" style="left:705.9px;top:609px;width:1px;height:58px;background:#474747;"></div>
<div class="a" style="left:1111.1px;top:609px;width:1px;height:58px;background:#474747;"></div>
<div class="badge" style="left:714.1px;top:613px;width:147.9px;height:53.7px;"><div class="hd" style="height:14px;background:#5b5b5b;"></div></div>
<div id="t93" class="t" style="left:717.80px;top:611.03px;font:400 11.4px/16px 'Liberation Sans','DejaVu Sans',sans-serif;color:#f1f1f1;transform:scaleX(1.0608);transform-origin:left center;-webkit-text-stroke:0.3px #f1f1f1;">Horizontal</div>
<div id="t94" class="t" style="left:717.30px;top:625.21px;font:400 10.5px/16px 'Liberation Sans','DejaVu Sans',sans-serif;color:#1a1a1a;transform:scaleX(1.0272);transform-origin:left center;">20 µs/div</div>
<div id="t95" class="t" style="left:796.40px;top:625.21px;font:400 10.5px/16px 'Liberation Sans','DejaVu Sans',sans-serif;color:#1a1a1a;transform:scaleX(1.0205);transform-origin:left center;">200 µs</div>
<div id="t96" class="t" style="left:717.30px;top:639.01px;font:400 10.5px/16px 'Liberation Sans','DejaVu Sans',sans-serif;color:#1a1a1a;transform:scaleX(0.9534);transform-origin:left center;">SR: 1.25 GS/s</div>
<div id="t97" class="t" style="left:796.40px;top:639.01px;font:400 10.5px/16px 'Liberation Sans','DejaVu Sans',sans-serif;color:#1a1a1a;transform:scaleX(1.0462);transform-origin:left center;">800 ps/pt</div>
<div id="t98" class="t" style="left:717.30px;top:652.81px;font:400 10.5px/16px 'Liberation Sans','DejaVu Sans',sans-serif;color:#1a1a1a;transform:scaleX(0.9940);transform-origin:left center;">RL: 250 kpts</div>
<div id="t99" class="t" style="left:807.10px;top:652.81px;font:400 10.5px/16px 'Liberation Sans','DejaVu Sans',sans-serif;color:#1a1a1a;transform:scaleX(1.0754);transform-origin:left center;">60%</div>
<div class="badge" style="left:868px;top:613px;width:118.0px;height:53.7px;"><div class="hd" style="height:14px;background:#5b5b5b;"></div></div>
<div id="t100" class="t" style="left:871.70px;top:611.03px;font:400 11.4px/16px 'Liberation Sans','DejaVu Sans',sans-serif;color:#f1f1f1;transform:scaleX(1.0148);transform-origin:left center;-webkit-text-stroke:0.3px #f1f1f1;">Trigger</div>
<div id="t101" class="t" style="left:900.60px;top:625.21px;font:400 10.5px/16px 'Liberation Sans','DejaVu Sans',sans-serif;color:#1a1a1a;transform:scaleX(0.9545);transform-origin:left center;">I2C</div>
<div id="t102" class="t" style="left:871.20px;top:639.01px;font:400 10.5px/16px 'Liberation Sans','DejaVu Sans',sans-serif;color:#1a1a1a;transform:scaleX(0.9706);transform-origin:left center;">Address</div>
<div class="badge" style="left:991.2px;top:613px;width:111.2px;height:53.7px;"><div class="hd" style="height:14px;background:#5b5b5b;"></div></div>
<div id="t103" class="t" style="left:994.90px;top:611.03px;font:400 11.4px/16px 'Liberation Sans','DejaVu Sans',sans-serif;color:#f1f1f1;transform:scaleX(1.0600);transform-origin:left center;-webkit-text-stroke:0.3px #f1f1f1;">Acquisition</div>
<div id="t104" class="t" style="left:994.80px;top:625.21px;font:400 10.5px/16px 'Liberation Sans','DejaVu Sans',sans-serif;color:#1a1a1a;transform:scaleX(1.0354);transform-origin:left center;">Auto,</div>
<div id="t105" class="t" style="left:1055.60px;top:625.21px;font:400 10.5px/16px 'Liberation Sans','DejaVu Sans',sans-serif;color:#1a1a1a;transform:scaleX(0.9797);transform-origin:left center;">Analyze</div>
<div id="t106" class="t" style="left:994.80px;top:639.01px;font:400 10.5px/16px 'Liberation Sans','DejaVu Sans',sans-serif;color:#1a1a1a;transform:scaleX(1.0142);transform-origin:left center;">Sample: 12 bits</div>
<div id="t107" class="t" style="left:994.80px;top:652.81px;font:400 10.5px/16px 'Liberation Sans','DejaVu Sans',sans-serif;color:#1a1a1a;">Single: 1 /1</div>
<div class="a" style="left:871.2px;top:627.6px;width:21.8px;height:12.4px;border-radius:2.5px;background:#ae6fc4;border:1px solid #74458a;"></div>
<div id="t108" class="t" style="left:732.00px;width:300px;text-align:center;top:625.11px;font:400 10.5px/16px 'Liberation Sans','DejaVu Sans',sans-serif;color:#1c1024;transform:scaleX(0.9810);transform-origin:center center;">B1</div>
<svg width="1200" height="675" viewBox="0 0 1200 675" style="pointer-events:none"><path d="M796.4,656.6H802.2V662.4H800.4L799.3,664.6L798.2,662.4H796.4Z" fill="#2a1606" stroke="#f08a1e" stroke-width="1"/><path d="M797.8,658.3H800.8M799.3,658.3V661.4" stroke="#f8c890" stroke-width="0.9"/></svg>
<div class="a" style="left:1119.4px;top:608px;width:68px;height:27px;border-radius:4px;background:#f6202a;"></div>
<div id="t109" class="t" style="left:1003.40px;width:300px;text-align:center;top:612.72px;font:700 11px/16px 'Liberation Sans','DejaVu Sans',sans-serif;color:#ffffff;transform:scaleX(0.9773);transform-origin:center center;">Stopped</div>
<div class="a" style="left:1119.4px;top:639.4px;width:68px;height:27.2px;border-radius:3px;background:#c9c9c9;"></div>
<div id="t110" class="t" style="left:1003.00px;width:300px;text-align:center;top:638.62px;font:400 10.8px/16px 'Liberation Sans','DejaVu Sans',sans-serif;color:#1a1a1a;transform:scaleX(1.0060);transform-origin:center center;">28 Nov 2025</div>
<div id="t111" class="t" style="left:1003.00px;width:300px;text-align:center;top:651.42px;font:400 10.8px/16px 'Liberation Sans','DejaVu Sans',sans-serif;color:#1a1a1a;transform:scaleX(1.0373);transform-origin:center center;">21:46:51</div>
</body></html>
